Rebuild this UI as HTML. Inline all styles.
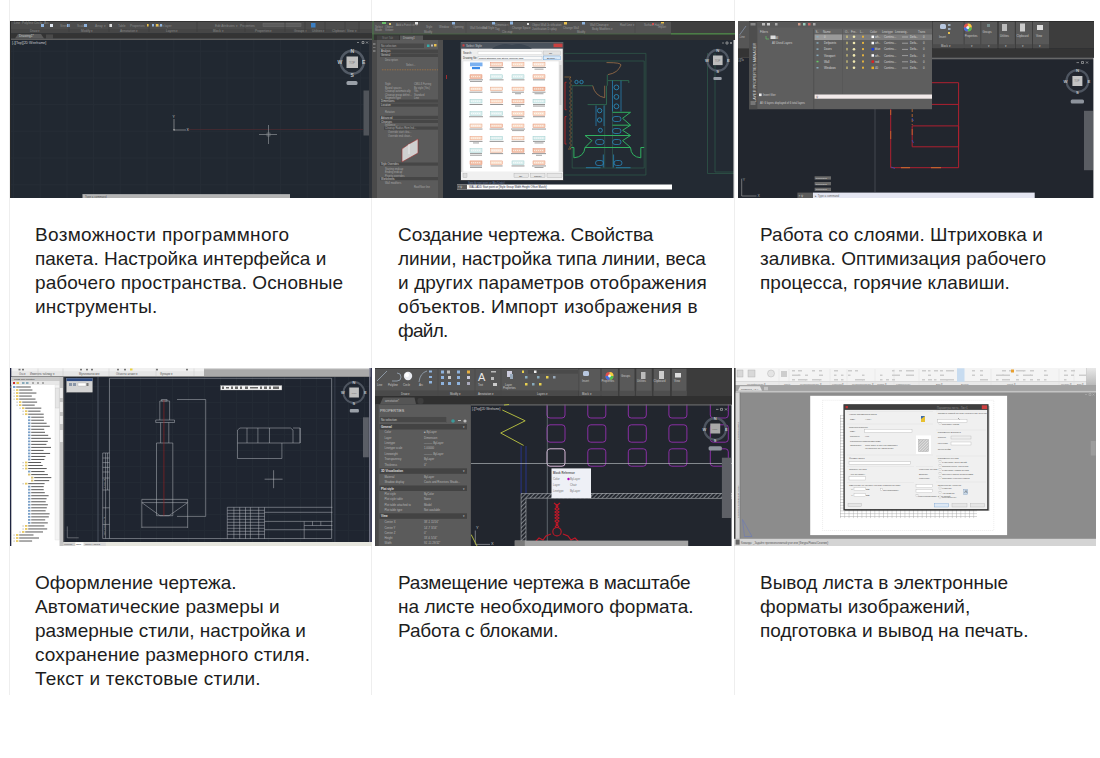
<!DOCTYPE html>
<html><head><meta charset="utf-8">
<style>
html,body{margin:0;padding:0;background:#fff;width:1100px;height:758px;overflow:hidden;position:relative}
body{font-family:"Liberation Sans",sans-serif}
.b{position:absolute;top:0;width:1px;height:695px;background:#eeeeee}
.im{position:absolute;overflow:hidden}
.im div,.im svg{position:absolute}
.t{position:absolute;font-size:19px;line-height:24px;color:#1d1d1d;white-space:nowrap}
</style></head><body>
<div class="b" style="left:9px"></div>
<div class="b" style="left:371px"></div>
<div class="b" style="left:734px"></div>

<div class="im" id="i1" style="left:10px;top:21px;width:362px;height:177px;background:#212730"><svg width="362" height="177" viewBox="0 0 362 177" style="left:0;top:0">
<defs>
<pattern id="g1" x="3" y="3" width="26.7" height="26.7" patternUnits="userSpaceOnUse">
<rect width="26.7" height="26.7" fill="#212831"/>
<path d="M0 0.5H26.7M0.5 0V26.7" stroke="#252c35" stroke-width="1"/>

</pattern>
</defs>
<rect width="362" height="177" fill="url(#g1)"/>
<rect x="0" y="0" width="362" height="8" fill="#4c4c4c"/>
<rect x="0" y="8" width="362" height="4.5" fill="#464646"/>
<rect x="0" y="12.5" width="362" height="5" fill="#343434"/>
<path d="M5 17.5L8 13H31L34 17.5Z" fill="#5a5a5a"/>
<rect x="36" y="13.5" width="7" height="4" fill="#4a4a4a"/>
<rect x="0" y="17.5" width="362" height="1.5" fill="#5e5e5e"/>
<rect x="0" y="0" width="1" height="177" fill="#2a2a2a"/>
<rect x="0" y="0" width="362" height="0.8" fill="#2e2e2e"/>
<g fill="#8a8a8a" font-size="3.2" font-family="Liberation Sans">
<text x="4" y="3">Line</text><text x="12" y="3">Polyline</text><text x="24" y="3">Circle</text><text x="34" y="3">Arc</text>
<text x="20" y="11">Draw ▾</text><text x="71" y="11">Modify ▾</text><text x="110" y="11">Annotation ▾</text><text x="156" y="11">Layers ▾</text>
<text x="203" y="11">Block ▾</text><text x="245" y="11">Properties ▾</text><text x="284" y="11">Groups ▾</text><text x="302" y="11">Utilities ▾</text><text x="322" y="11">Clipboard</text><text x="337" y="11">View ▾</text>
<text x="50" y="6">Stretch</text><text x="67" y="6">Scale</text><text x="85" y="6">Array ▾</text><text x="108" y="6">Table</text>
<text x="120" y="6">Properties</text><text x="145" y="6">Match layer</text><text x="205" y="6">Edit Attributes ▾</text><text x="230" y="6">Properties</text>
<text x="9" y="16.3" fill="#c8c8c8">Drawing1*</text>
<text x="2" y="22.5" fill="#c9ccd0" font-size="3.5">[-][Top][2D Wireframe]</text>
</g>
<g fill="#8fb3dd">
<rect x="31" y="3" width="3" height="3"/><rect x="40" y="3" width="3" height="3" fill="#dfe6ef"/><rect x="57" y="3" width="3" height="3"/><rect x="74" y="3" width="3" height="3"/><rect x="99" y="3" width="3" height="3" fill="#dddddd"/>
<rect x="137" y="3" width="2" height="2.5" fill="#e8c050"/><rect x="142" y="3" width="2" height="2.5" fill="#8fb3dd"/><rect x="146" y="3" width="2.5" height="2.5" fill="#e8c050"/><rect x="150" y="3" width="2" height="2.5" fill="#8fb3dd"/>
<rect x="301" y="2" width="4.5" height="4.5" fill="#3b7fc4"/>
</g>
<rect x="253" y="2.2" width="38" height="3.3" fill="#5c5c5c" stroke="#6e6e6e" stroke-width="0.5"/>
<g stroke="#3e3e3e" stroke-width="0.7">
<path d="M59 1V11M99 1V11M139 1V11M187 1V11M235 1V11M275 1V11M295 1V11M315 1V11M335 1V11M349 1V11"/>
</g>
<path d="M177 108.5H353" stroke="#4e2a30" stroke-width="0.7"/>
<path d="M164 98V109H176" stroke="#b0b0b0" stroke-width="0.6" fill="none"/>
<text x="162.5" y="97" font-size="3.5" fill="#c8c8c8" font-family="Liberation Sans">Y</text>
<text x="176.5" y="109.5" font-size="3.5" fill="#c8c8c8" font-family="Liberation Sans">X</text>
<rect x="163.2" y="108.2" width="1.6" height="1.6" fill="none" stroke="#aaa" stroke-width="0.4"/>
<path d="M249 113.5H267M258.5 104V123" stroke="#8a8e94" stroke-width="0.7"/>
<rect x="257" y="112" width="3" height="3" fill="none" stroke="#8a8e94" stroke-width="0.5"/>
<circle cx="342.2" cy="41.2" r="11.5" fill="none" stroke="#535b66" stroke-width="2.4"/>
<rect x="336.5" y="35.5" width="11.5" height="11.5" fill="#bfbfbf"/>
<text x="339" y="42.5" font-size="3" fill="#777" font-family="Liberation Sans">TOP</text>
<g font-size="5" fill="#c0c4c8" font-family="Liberation Sans" font-weight="bold">
<text x="340.5" y="31.5">N</text><text x="340.5" y="56">S</text><text x="352" y="43">E</text><text x="327.5" y="43">W</text>
</g>
<rect x="336.5" y="60" width="11" height="4" rx="1.5" fill="#9aa0a8"/>
<path d="M347 21.5H349M352 20.5h2v2h-2zM356 20.5l2 2M358 20.5l-2 2" stroke="#c0c0c0" stroke-width="0.6" fill="none"/>
<rect x="353.5" y="69.5" width="5.5" height="45" fill="#50545a"/>
<rect x="359" y="19" width="3" height="158" fill="#30343a"/>
<rect x="72.5" y="173.5" width="207.5" height="3.5" fill="#b3b3b3"/>
<rect x="72.5" y="173.5" width="207.5" height="0.6" fill="#d8d8d8"/>
<text x="75" y="176.6" font-size="2.8" fill="#555" font-family="Liberation Sans">Type a command</text>
</svg>
</div>
<div class="im" id="i2" style="left:372px;top:21px;width:363px;height:177px;background:#232a33"><svg width="363" height="177" viewBox="0 0 363 177" style="left:0;top:0">
<rect width="363" height="177" fill="#232a33"/>
<!-- ribbon -->
<rect x="0" y="0" width="299" height="13.5" fill="#535353"/>
<rect x="299" y="0" width="64" height="12.5" fill="#3f3f3f"/>
<rect x="0" y="0" width="363" height="0.8" fill="#2e2e2e"/>
<rect x="0" y="12.6" width="363" height="1" fill="#4a6b45"/>
<rect x="299" y="12.4" width="64" height="1.2" fill="#5aa050"/>
<rect x="0" y="13.6" width="363" height="5.4" fill="#343434"/>
<rect x="5" y="14.5" width="22" height="4.5" fill="#404040"/>
<rect x="28" y="14.5" width="23" height="4.5" fill="#575757"/>
<rect x="0.5" y="0" width="1" height="19" fill="#4a7a48"/>
<g fill="#9a9a9a" font-size="2.8" font-family="Liberation Sans">
<text x="3" y="7">Select</text><text x="3" y="10">Mode</text><text x="13" y="7">Object</text><text x="13" y="10">Viewer</text>
<text x="24" y="4.5">Add a Function ▾</text><text x="54" y="7">Style</text><text x="67" y="7">Window</text><text x="81" y="7">Opening</text>
<text x="98" y="8">Wall Selected</text><text x="110" y="8">Wall Style</text><text x="123" y="5">Dimension</text><text x="123" y="9">Tag</text>
<text x="140" y="8">Change Space</text><text x="160" y="4.5">Object Wall Justification</text><text x="160" y="9">Justification Display</text>
<text x="191" y="8">Change Wall</text><text x="218" y="4.5">Wall Cleanup ▾</text><text x="220" y="9">Body Modifiers ▾</text><text x="248" y="4.5">Roof Line ▾</text><text x="272" y="4.5">Surface Hatch ▾</text>
<text x="286" y="7">Import</text><text x="52" y="12.3">Modify</text><text x="130" y="12.3">Cleanup</text><text x="205" y="12.3">Modify</text>
<text x="10" y="17.8" fill="#7a7a7a">Start Tab</text><text x="31" y="17.8" fill="#b8b8b8">Drawing1</text>
</g>
<g fill="#8fb3dd"><rect x="10" y="1" width="4" height="2" fill="#6ac06a"/><rect x="17" y="2" width="2" height="2" fill="#d6c070"/><rect x="43" y="1" width="3" height="2.5" fill="#ddd"/><rect x="80" y="1" width="3" height="2.5"/><rect x="120" y="1" width="3" height="2.5"/><rect x="138" y="0.5" width="3" height="3"/><rect x="155" y="2" width="2" height="2" fill="#ddd"/><rect x="192" y="1" width="3" height="2.5" fill="#e8c050"/><rect x="210" y="1" width="3" height="2.5"/><rect x="280" y="2" width="2" height="2" fill="#d05050"/><rect x="289" y="1" width="3" height="1.5" fill="#e8c050"/></g>
<g stroke="#474747" stroke-width="0.6"><path d="M40 1V12M94 1V12M135 1V12M178 1V12M263 1V12"/></g>
<!-- properties palette -->
<rect x="0" y="19" width="71" height="158" fill="#5b5b5b"/>
<rect x="0" y="19" width="5" height="158" fill="#4a4a4a"/>
<rect x="66" y="19" width="5" height="158" fill="#4e4e4e"/>
<rect x="1" y="22" width="2.5" height="2" fill="#777"/><rect x="1" y="26" width="2.5" height="1" fill="#777"/><rect x="1" y="29" width="2.5" height="2" fill="#777"/>
<rect x="8" y="22.5" width="44" height="4.5" fill="#484848"/>
<text x="9" y="26" font-size="2.8" fill="#aaa" font-family="Liberation Sans">No selection</text>
<rect x="55" y="23.5" width="2.5" height="2.5" fill="#3aa" /><rect x="59" y="23.5" width="2" height="2" fill="#bbb"/><rect x="62" y="23" width="2.5" height="2.5" fill="#e8c050"/>
<g fill="#464646">
<rect x="8" y="28.5" width="58" height="3.5"/><rect x="8" y="32.5" width="58" height="3.5"/>
<rect x="8" y="78.5" width="58" height="3.2"/><rect x="8" y="82.5" width="58" height="3.2"/>
<rect x="8" y="94.8" width="58" height="3.2"/><rect x="8" y="98.8" width="58" height="3.2"/>
<rect x="12" y="105.5" width="54" height="3.2"/>
<rect x="8" y="141.5" width="58" height="3.2"/><rect x="8" y="156" width="58" height="3.2"/>
</g>
<g fill="#a8a8a8" font-size="2.6" font-family="Liberation Sans">
<text x="9" y="31.2" fill="#ccc">Analysis</text><text x="9" y="35.2" fill="#ccc">General</text><text x="13" y="39.5">Description</text>
<text x="34" y="44.5">Select...</text>
<text x="13" y="64">Style</text><text x="42" y="64">CMU-8 Furring</text>
<text x="13" y="67.5">Bound spaces</text><text x="42" y="67.5">By style (Yes)</text>
<text x="13" y="71">Cleanup automatically</text><text x="42" y="71">Yes</text>
<text x="13" y="74.5">Cleanup group definit...</text><text x="42" y="74.5">Standard</text>
<text x="13" y="78">Segment type</text><text x="42" y="78">Line</text>
<text x="9" y="81.2" fill="#ccc">Dimensions</text><text x="9" y="85.2" fill="#ccc">Location</text>
<text x="13" y="92">Rotation</text><text x="9" y="97.5" fill="#ccc">Advanced</text><text x="9" y="101.5" fill="#ccc">Cleanups</text>
<text x="13" y="105">Influence ...</text><text x="13" y="108">Cleanup Radius Rem Ind...</text><text x="16" y="112">Override start clea...</text><text x="16" y="115.5">Override end clean...</text>
<text x="9" y="144.2" fill="#ccc">Style Overrides</text><text x="13" y="148.5">Starting endcap</text><text x="13" y="152">Ending endcap</text><text x="13" y="155.5">Priority overrides</text>
<text x="9" y="158.8" fill="#ccc">Worksheets</text><text x="13" y="163">Wall modifiers</text><text x="42" y="166.5">Roof/floor line</text>
</g>
<path d="M10 48.8H66" stroke="#b07a40" stroke-width="0.7" stroke-dasharray="1.5 1"/>
<path d="M30 128L46 118L46 127L30 139Z" fill="#dcdcdc"/>
<path d="M30 128L37 123L46 118L46 132L30 141Z" fill="#cfcfcf" stroke="#a03030" stroke-width="0.6"/>
<path d="M37 123L37 133" stroke="#eee" stroke-width="0.8"/>
<!-- small red mark -->
<rect x="74" y="54" width="0.8" height="4" fill="#c03030"/>
<!-- drawing -->
<g fill="none" stroke-width="0.7">
<path d="M192.4 32.4H273.9V154H192.4" stroke="#2f5c4a"/>
<path d="M192.4 40H272.2V147H200.2V64" stroke="#2f5c4a"/>
<path d="M335.5 32V152.5H363M343 32V151H363" stroke="#2f5c4a"/>
<path d="M235.3 53.6V64.7M200.2 64.7H220.7M234.5 64.7V83.6H215.6M236 59.6H256.8V62" stroke="#2f6a50" stroke-width="0.9"/>
<path d="M234.5 41.6H236Q249 41.6 249 44Q246 52 236 53.6" stroke="#b07a4a"/>
<path d="M220.7 64.7Q223 75 232.7 76.7V64.7" stroke="#b07a4a"/>
<path d="M232.7 83.6V147M240.5 83.6V147" stroke="#2d4a48" stroke-width="1"/>
<path d="M240.5 59.6V90.5M249 59.6V90.5M224 84.5V105M232 84.5V105" stroke="#2a8ac0"/>
<circle cx="244.4" cy="66.4" r="2.4" stroke="#2aa0d8"/><circle cx="244.4" cy="75.9" r="2.4" stroke="#2aa0d8"/><circle cx="244.4" cy="85.3" r="2.4" stroke="#2aa0d8"/>
<circle cx="227.6" cy="89.6" r="2.2" stroke="#2aa0d8"/><circle cx="227.6" cy="99" r="2.2" stroke="#2aa0d8"/><circle cx="228.4" cy="109.3" r="2" stroke="#2aa0d8"/>
<circle cx="204.5" cy="61" r="1.7" stroke="#2aa0d8"/><circle cx="209.5" cy="61" r="1.7" stroke="#2aa0d8"/>
<path d="M240.5 91.3H258.5L250.6 97.3L258.5 104.2H240.5M258.5 104.2L250.6 109.3L258.5 114.5H213L219.9 119.6L213 126.5H258.5L250.6 119.6L258.5 114.5M258.5 126.5Q259 136 268.8 136.8V126.5H272.2M213 126.5Q212 136 201.9 136.8V126.5H199.3" stroke="#30b060" stroke-width="1"/>
<g stroke="#2a90c8" stroke-width="0.7">
<rect x="240.5" y="95.5" width="8.5" height="5" rx="2.5"/><rect x="240.5" y="107.5" width="8.5" height="5" rx="2.5"/><rect x="240.5" y="118.5" width="8.5" height="5" rx="2.5"/>
<rect x="223.5" y="118.5" width="8.5" height="5" rx="2.5"/><rect x="223.5" y="139.5" width="8" height="5" rx="2.5"/><rect x="242" y="139.5" width="8" height="5" rx="2.5"/>
<path d="M231.3 133.5V146.5M241.6 133.5V146.5M213.9 146.7H228.5M243.9 146.7H258.5"/>
</g>
<path d="M194.5 61.3H193V88.7H194.5M194.5 95.6H193V123H194.5" stroke="#b02828" stroke-width="1"/>
<path d="M192.4 56H199M198.8 56L197.5 58L199.5 60L197.5 62L199.5 64L197.5 66L199.5 68L197.5 70L199.5 72L197.5 74L199.5 76L197.5 78L199.5 80L197.5 82L199.5 84L197.5 86L199.5 88L197.5 90L199.5 92L197.5 94L199.5 96L197.5 98L199.5 100L197.5 102L199.5 104L197.5 106L199.5 108L197.5 110L199.5 112L197.5 114L199.5 116L197.5 118L199.5 120L197.5 122L199.5 124L197.5 126L199 128H196" stroke="#b0783a" stroke-width="0.6"/>
</g>
<!-- dialog -->
<rect x="88.5" y="21.5" width="103" height="138.5" fill="#3a3a3a" opacity="0.6"/>
<rect x="89" y="21.7" width="102" height="137.3" fill="#eeeeee" stroke="#6a6a6a" stroke-width="0.5"/>
<rect x="89" y="21.7" width="102" height="6" fill="#4a525c"/>
<path d="M120 27.7Q130 21 140 24Q150 21 160 27.7" fill="#3a4450"/>
<rect x="181.5" y="22.6" width="9" height="3.6" fill="#c84040"/>
<rect x="90.5" y="23.3" width="2" height="2.2" fill="#d04040"/>
<text x="94" y="26.3" font-size="3" fill="#c8ccd0" font-family="Liberation Sans">Select Style</text>
<text x="91" y="33" font-size="2.6" fill="#333" font-family="Liberation Sans">Search:</text>
<rect x="106" y="30.5" width="64" height="3.2" fill="#fff" stroke="#bbb" stroke-width="0.3"/>
<rect x="171.5" y="30" width="17" height="4" fill="#e4e4e4" stroke="#aaa" stroke-width="0.3"/>
<text x="177" y="33" font-size="2.4" fill="#333" font-family="Liberation Sans">Go</text>
<text x="91" y="38" font-size="2.6" fill="#333" font-family="Liberation Sans">Drawing file:</text>
<rect x="106" y="35.5" width="64" height="3.2" fill="#fafafa" stroke="#9ab" stroke-width="0.3"/>
<text x="107" y="37.8" font-size="2.3" fill="#222" font-family="Liberation Sans">Project Standard Wall Styles (Imperial).dwg</text>
<rect x="171.5" y="35" width="17" height="3.8" fill="#dceaf8" stroke="#5a9ad8" stroke-width="0.4"/>
<text x="175" y="37.9" font-size="2.4" fill="#333" font-family="Liberation Sans">Browse...</text>
<rect x="91" y="40" width="96" height="111" fill="#fff" stroke="#c8c8c8" stroke-width="0.3"/>
<rect x="187" y="40" width="3" height="111" fill="#e6e6e6"/><rect x="187.5" y="44" width="2" height="40" fill="#cfcfcf"/>
<g font-family="Liberation Sans" font-size="2" fill="#555">
<rect x="98" y="41.5" width="12.5" height="3.8" fill="#7ab0f0"/><rect x="100" y="46" width="8" height="2.2" fill="#3a8ae8"/>
<rect x="118.6" y="41.5" width="12" height="3.6" fill="#f8d8c4" stroke="#e08060" stroke-width="0.4"/>
<path d="M119.6 43.3H129.6" stroke="#fff" stroke-width="0.7" stroke-dasharray="1.2 0.8"/>
<rect x="117.6" y="46.1" width="14" height="0.9" fill="#8a8a8a"/>
<rect x="120.1" y="47.7" width="9" height="0.9" fill="#9a9a9a"/>
<rect x="140" y="41.5" width="12" height="3.6" fill="#fae0cc" stroke="#e89070" stroke-width="0.4"/>
<path d="M141 43.3H151" stroke="#fff" stroke-width="0.7" stroke-dasharray="1.2 0.8"/>
<rect x="139.5" y="46.1" width="13" height="0.9" fill="#8a8a8a"/>
<rect x="161" y="41.5" width="12" height="3.6" fill="#fbe6d8" stroke="#e0906a" stroke-width="0.4"/>
<path d="M162 43.3H172" stroke="#fff" stroke-width="0.7" stroke-dasharray="1.2 0.8"/>
<rect x="160.0" y="46.1" width="14" height="0.9" fill="#8a8a8a"/>
<rect x="162.5" y="47.7" width="9" height="0.9" fill="#9a9a9a"/>
<rect x="98" y="53.8" width="12" height="3.6" fill="#f2c4ac" stroke="#e07a58" stroke-width="0.4"/>
<path d="M99 55.599999999999994H109" stroke="#fff" stroke-width="0.7" stroke-dasharray="1.2 0.8"/>
<rect x="97.0" y="58.4" width="14" height="0.9" fill="#8a8a8a"/>
<rect x="98.0" y="60.0" width="12" height="0.9" fill="#9a9a9a"/>
<rect x="118.6" y="53.8" width="12" height="3.6" fill="#dff0f0" stroke="#90c8c8" stroke-width="0.4"/>
<path d="M119.6 55.599999999999994H129.6" stroke="#fff" stroke-width="0.7" stroke-dasharray="1.2 0.8"/>
<rect x="117.6" y="58.4" width="14" height="0.9" fill="#8a8a8a"/>
<rect x="140" y="53.8" width="12" height="3.6" fill="#dff0f0" stroke="#90c8c8" stroke-width="0.4"/>
<path d="M141 55.599999999999994H151" stroke="#fff" stroke-width="0.7" stroke-dasharray="1.2 0.8"/>
<rect x="139.5" y="58.4" width="13" height="0.9" fill="#8a8a8a"/>
<rect x="161" y="53.8" width="12" height="3.6" fill="#f8d8c4" stroke="#e08060" stroke-width="0.4"/>
<path d="M162 55.599999999999994H172" stroke="#fff" stroke-width="0.7" stroke-dasharray="1.2 0.8"/>
<rect x="161.0" y="58.4" width="12" height="0.9" fill="#8a8a8a"/>
<rect x="98" y="66.1" width="12" height="3.6" fill="#fae0cc" stroke="#e89070" stroke-width="0.4"/>
<path d="M99 67.89999999999999H109" stroke="#fff" stroke-width="0.7" stroke-dasharray="1.2 0.8"/>
<rect x="97.5" y="70.69999999999999" width="13" height="0.9" fill="#8a8a8a"/>
<rect x="118.6" y="66.1" width="12" height="3.6" fill="#fbe6d8" stroke="#e0906a" stroke-width="0.4"/>
<path d="M119.6 67.89999999999999H129.6" stroke="#fff" stroke-width="0.7" stroke-dasharray="1.2 0.8"/>
<rect x="118.6" y="70.69999999999999" width="12" height="0.9" fill="#8a8a8a"/>
<rect x="140" y="66.1" width="12" height="3.6" fill="#fae0cc" stroke="#e89070" stroke-width="0.4"/>
<path d="M141 67.89999999999999H151" stroke="#fff" stroke-width="0.7" stroke-dasharray="1.2 0.8"/>
<rect x="140.0" y="70.69999999999999" width="12" height="0.9" fill="#8a8a8a"/>
<rect x="143.0" y="72.3" width="6" height="0.9" fill="#9a9a9a"/>
<rect x="161" y="66.1" width="12" height="3.6" fill="#f2c4ac" stroke="#e07a58" stroke-width="0.4"/>
<path d="M162 67.89999999999999H172" stroke="#fff" stroke-width="0.7" stroke-dasharray="1.2 0.8"/>
<rect x="160.5" y="70.69999999999999" width="13" height="0.9" fill="#8a8a8a"/>
<rect x="162.5" y="72.3" width="9" height="0.9" fill="#9a9a9a"/>
<rect x="98" y="78.4" width="12" height="3.6" fill="#dff0f0" stroke="#90c8c8" stroke-width="0.4"/>
<path d="M99 80.2H109" stroke="#fff" stroke-width="0.7" stroke-dasharray="1.2 0.8"/>
<rect x="97.5" y="83.0" width="13" height="0.9" fill="#8a8a8a"/>
<rect x="118.6" y="78.4" width="12" height="3.6" fill="#fae0cc" stroke="#e89070" stroke-width="0.4"/>
<path d="M119.6 80.2H129.6" stroke="#fff" stroke-width="0.7" stroke-dasharray="1.2 0.8"/>
<rect x="118.1" y="83.0" width="13" height="0.9" fill="#8a8a8a"/>
<rect x="140" y="78.4" width="12" height="3.6" fill="#f8d8c4" stroke="#e08060" stroke-width="0.4"/>
<path d="M141 80.2H151" stroke="#fff" stroke-width="0.7" stroke-dasharray="1.2 0.8"/>
<rect x="139.5" y="83.0" width="13" height="0.9" fill="#8a8a8a"/>
<rect x="143.0" y="84.60000000000001" width="6" height="0.9" fill="#9a9a9a"/>
<rect x="161" y="78.4" width="12" height="3.6" fill="#dff0f0" stroke="#90c8c8" stroke-width="0.4"/>
<path d="M162 80.2H172" stroke="#fff" stroke-width="0.7" stroke-dasharray="1.2 0.8"/>
<rect x="161.0" y="83.0" width="12" height="0.9" fill="#8a8a8a"/>
<rect x="161.0" y="84.60000000000001" width="12" height="0.9" fill="#9a9a9a"/>
<rect x="98" y="90.7" width="12" height="3.6" fill="#dff0f0" stroke="#90c8c8" stroke-width="0.4"/>
<path d="M99 92.5H109" stroke="#fff" stroke-width="0.7" stroke-dasharray="1.2 0.8"/>
<rect x="97.0" y="95.3" width="14" height="0.9" fill="#8a8a8a"/>
<rect x="118.6" y="90.7" width="12" height="3.6" fill="#dff0f0" stroke="#90c8c8" stroke-width="0.4"/>
<path d="M119.6 92.5H129.6" stroke="#fff" stroke-width="0.7" stroke-dasharray="1.2 0.8"/>
<rect x="117.6" y="95.3" width="14" height="0.9" fill="#8a8a8a"/>
<rect x="140" y="90.7" width="12" height="3.6" fill="#fae0cc" stroke="#e89070" stroke-width="0.4"/>
<path d="M141 92.5H151" stroke="#fff" stroke-width="0.7" stroke-dasharray="1.2 0.8"/>
<rect x="139.5" y="95.3" width="13" height="0.9" fill="#8a8a8a"/>
<rect x="141.5" y="96.9" width="9" height="0.9" fill="#9a9a9a"/>
<rect x="161" y="90.7" width="12" height="3.6" fill="#fae0cc" stroke="#e89070" stroke-width="0.4"/>
<path d="M162 92.5H172" stroke="#fff" stroke-width="0.7" stroke-dasharray="1.2 0.8"/>
<rect x="161.0" y="95.3" width="12" height="0.9" fill="#8a8a8a"/>
<rect x="98" y="103" width="12" height="3.6" fill="#fbe6d8" stroke="#e0906a" stroke-width="0.4"/>
<path d="M99 104.8H109" stroke="#fff" stroke-width="0.7" stroke-dasharray="1.2 0.8"/>
<rect x="97.5" y="107.6" width="13" height="0.9" fill="#8a8a8a"/>
<rect x="118.6" y="103" width="12" height="3.6" fill="#f8d8c4" stroke="#e08060" stroke-width="0.4"/>
<path d="M119.6 104.8H129.6" stroke="#fff" stroke-width="0.7" stroke-dasharray="1.2 0.8"/>
<rect x="117.6" y="107.6" width="14" height="0.9" fill="#8a8a8a"/>
<rect x="140" y="103" width="12" height="3.6" fill="#fae0cc" stroke="#e89070" stroke-width="0.4"/>
<path d="M141 104.8H151" stroke="#fff" stroke-width="0.7" stroke-dasharray="1.2 0.8"/>
<rect x="139.0" y="107.6" width="14" height="0.9" fill="#8a8a8a"/>
<rect x="140.0" y="109.2" width="12" height="0.9" fill="#9a9a9a"/>
<rect x="161" y="103" width="12" height="3.6" fill="#f8d8c4" stroke="#e08060" stroke-width="0.4"/>
<path d="M162 104.8H172" stroke="#fff" stroke-width="0.7" stroke-dasharray="1.2 0.8"/>
<rect x="160.0" y="107.6" width="14" height="0.9" fill="#8a8a8a"/>
<rect x="98" y="115.3" width="12" height="3.6" fill="#fae0cc" stroke="#e89070" stroke-width="0.4"/>
<path d="M99 117.1H109" stroke="#fff" stroke-width="0.7" stroke-dasharray="1.2 0.8"/>
<rect x="97.5" y="119.89999999999999" width="13" height="0.9" fill="#8a8a8a"/>
<rect x="101.0" y="121.5" width="6" height="0.9" fill="#9a9a9a"/>
<rect x="118.6" y="115.3" width="12" height="3.6" fill="#dff0f0" stroke="#90c8c8" stroke-width="0.4"/>
<path d="M119.6 117.1H129.6" stroke="#fff" stroke-width="0.7" stroke-dasharray="1.2 0.8"/>
<rect x="117.6" y="119.89999999999999" width="14" height="0.9" fill="#8a8a8a"/>
<rect x="140" y="115.3" width="12" height="3.6" fill="#fbe6d8" stroke="#e0906a" stroke-width="0.4"/>
<path d="M141 117.1H151" stroke="#fff" stroke-width="0.7" stroke-dasharray="1.2 0.8"/>
<rect x="139.5" y="119.89999999999999" width="13" height="0.9" fill="#8a8a8a"/>
<rect x="161" y="115.3" width="12" height="3.6" fill="#dff0f0" stroke="#90c8c8" stroke-width="0.4"/>
<path d="M162 117.1H172" stroke="#fff" stroke-width="0.7" stroke-dasharray="1.2 0.8"/>
<rect x="161.0" y="119.89999999999999" width="12" height="0.9" fill="#8a8a8a"/>
<rect x="162.5" y="121.5" width="9" height="0.9" fill="#9a9a9a"/>
<rect x="98" y="127.6" width="12" height="3.6" fill="#dff0f0" stroke="#90c8c8" stroke-width="0.4"/>
<path d="M99 129.4H109" stroke="#fff" stroke-width="0.7" stroke-dasharray="1.2 0.8"/>
<rect x="98.0" y="132.2" width="12" height="0.9" fill="#8a8a8a"/>
<rect x="98.0" y="133.79999999999998" width="12" height="0.9" fill="#9a9a9a"/>
<rect x="118.6" y="127.6" width="12" height="3.6" fill="#fbe6d8" stroke="#e0906a" stroke-width="0.4"/>
<path d="M119.6 129.4H129.6" stroke="#fff" stroke-width="0.7" stroke-dasharray="1.2 0.8"/>
<rect x="118.1" y="132.2" width="13" height="0.9" fill="#8a8a8a"/>
<rect x="140" y="127.6" width="12" height="3.6" fill="#f2c4ac" stroke="#e07a58" stroke-width="0.4"/>
<path d="M141 129.4H151" stroke="#fff" stroke-width="0.7" stroke-dasharray="1.2 0.8"/>
<rect x="139.0" y="132.2" width="14" height="0.9" fill="#8a8a8a"/>
<rect x="161" y="127.6" width="12" height="3.6" fill="#f2c4ac" stroke="#e07a58" stroke-width="0.4"/>
<path d="M162 129.4H172" stroke="#fff" stroke-width="0.7" stroke-dasharray="1.2 0.8"/>
<rect x="160.0" y="132.2" width="14" height="0.9" fill="#8a8a8a"/>
<rect x="164.0" y="133.79999999999998" width="6" height="0.9" fill="#9a9a9a"/>
<rect x="98" y="139.9" width="12" height="3.6" fill="#f2c4ac" stroke="#e07a58" stroke-width="0.4"/>
<path d="M99 141.70000000000002H109" stroke="#fff" stroke-width="0.7" stroke-dasharray="1.2 0.8"/>
<rect x="98.0" y="144.5" width="12" height="0.9" fill="#8a8a8a"/>
<rect x="98.0" y="146.1" width="12" height="0.9" fill="#9a9a9a"/>
<rect x="118.6" y="139.9" width="12" height="3.6" fill="#fae0cc" stroke="#e89070" stroke-width="0.4"/>
<path d="M119.6 141.70000000000002H129.6" stroke="#fff" stroke-width="0.7" stroke-dasharray="1.2 0.8"/>
<rect x="118.6" y="144.5" width="12" height="0.9" fill="#8a8a8a"/>
<rect x="140" y="139.9" width="12" height="3.6" fill="#dff0f0" stroke="#90c8c8" stroke-width="0.4"/>
<path d="M141 141.70000000000002H151" stroke="#fff" stroke-width="0.7" stroke-dasharray="1.2 0.8"/>
<rect x="139.5" y="144.5" width="13" height="0.9" fill="#8a8a8a"/>
<rect x="161" y="139.9" width="12" height="3.6" fill="#f8d8c4" stroke="#e08060" stroke-width="0.4"/>
<path d="M162 141.70000000000002H172" stroke="#fff" stroke-width="0.7" stroke-dasharray="1.2 0.8"/>
<rect x="160.0" y="144.5" width="14" height="0.9" fill="#8a8a8a"/>
<rect x="162.5" y="146.1" width="9" height="0.9" fill="#9a9a9a"/>
</g>
<rect x="89" y="151" width="102" height="8" fill="#f0f0f0"/>
<rect x="91" y="152.5" width="4" height="4" fill="#ddd" stroke="#999" stroke-width="0.3"/>
<rect x="142" y="152.5" width="14.5" height="4" fill="#e6e6e6" stroke="#999" stroke-width="0.3"/>
<rect x="158.5" y="152.5" width="14.5" height="4" fill="#e6e6e6" stroke="#999" stroke-width="0.3"/>
<rect x="175" y="152.5" width="15" height="4" fill="#e6e6e6" stroke="#999" stroke-width="0.3"/>
<text x="147" y="155.5" font-size="2.4" fill="#333" font-family="Liberation Sans">OK</text>
<text x="162" y="155.5" font-size="2.4" fill="#333" font-family="Liberation Sans">Cancel</text>
<!-- command line -->
<text x="96" y="162.5" font-size="2.6" fill="#6a7a9a" font-family="Liberation Sans">Specify next point or [Arc/Undo]:</text>
<rect x="85" y="163.5" width="215" height="5" fill="#ffffff"/>
<rect x="85" y="163.5" width="10" height="5" fill="#5a5a5a"/>
<text x="86" y="167.3" font-size="2.8" fill="#ddd" font-family="Liberation Sans">× ⚲</text>
<text x="97" y="167.3" font-size="2.7" fill="#223" font-family="Liberation Sans">WALLADD Start point or [Style Group Width Height Offset Match]:</text>
<!-- viewcube -->
<circle cx="345.7" cy="39.3" r="10.4" fill="none" stroke="#505864" stroke-width="2.2"/>
<rect x="341" y="34.5" width="9.6" height="9.6" fill="#bdbdbd"/>
<text x="343" y="40.5" font-size="2.6" fill="#777" font-family="Liberation Sans">TOP</text>
<g font-size="4.2" fill="#c0c4c8" font-family="Liberation Sans" font-weight="bold"><text x="344.2" y="30.5">N</text><text x="344.2" y="52">S</text><text x="355" y="41">E</text><text x="333" y="41">W</text></g>
<rect x="341.4" y="55.9" width="8.3" height="3" rx="1" fill="#9aa0a8"/>
<path d="M350 22H352M354 21h2v2h-2zM358 21l2 2M360 21l-2 2" stroke="#c0c0c0" stroke-width="0.6" fill="none"/>
<rect x="361.5" y="19" width="1.5" height="158" fill="#e8e8e8"/>
</svg>
</div>
<div class="im" id="i3" style="left:738px;top:21px;width:356px;height:177px;background:#22262e"><svg width="356" height="177" viewBox="0 0 356 177" style="left:0;top:0">
<rect width="356" height="177" fill="#22262e"/>
<rect x="0" y="0" width="356" height="27.4" fill="#3d3d3d"/>
<rect x="0" y="0" width="356" height="0.8" fill="#2a2a2a"/>
<rect x="0" y="0" width="11" height="28" fill="#565656"/>
<path d="M1.5 14L8 5" stroke="#8a9ab0" stroke-width="0.7"/>
<text x="1.5" y="16.5" font-size="2.8" fill="#bbb" font-family="Liberation Sans">Line</text>
<rect x="0" y="28" width="11" height="9" fill="#383838"/>
<path d="M3 37L5 33H11V37Z" fill="#5a5a5a"/>
<text x="0" y="39.5" font-size="2.6" fill="#bbb" font-family="Liberation Sans">[-][To</text>
<rect x="194.7" y="0.8" width="31" height="26.6" fill="#585858"/>
<rect x="194.7" y="23.2" width="31" height="4.2" fill="#4c4c4c"/>
<rect x="226.5" y="0.8" width="16" height="26.6" fill="#585858"/>
<rect x="226.5" y="23.2" width="16" height="4.2" fill="#4c4c4c"/>
<rect x="243.2" y="0.8" width="16" height="26.6" fill="#585858"/>
<rect x="243.2" y="23.2" width="16" height="4.2" fill="#4c4c4c"/>
<rect x="260.8" y="0.8" width="16" height="26.6" fill="#585858"/>
<rect x="260.8" y="23.2" width="16" height="4.2" fill="#4c4c4c"/>
<rect x="278" y="0.8" width="16" height="26.6" fill="#585858"/>
<rect x="278" y="23.2" width="16" height="4.2" fill="#4c4c4c"/>
<rect x="295" y="0.8" width="16" height="26.6" fill="#585858"/>
<rect x="295" y="23.2" width="16" height="4.2" fill="#4c4c4c"/>
<rect x="202" y="3" width="6" height="5" rx="1.5" fill="#b8c8e0"/><rect x="210" y="3" width="2.5" height="2" fill="#9ab"/><rect x="210" y="7" width="2.5" height="2" fill="#9ab"/><rect x="210" y="11" width="2" height="2" fill="#e8c050"/>
<circle cx="229.8" cy="6.5" r="4" fill="#e05050"/><path d="M229.8 2.5A4 4 0 0 1 233.8 6.5L229.8 6.5Z" fill="#f0d040"/><path d="M233.8 6.5A4 4 0 0 1 229.8 10.5L229.8 6.5Z" fill="#50c050"/><path d="M229.8 10.5A4 4 0 0 1 225.8 6.5L229.8 6.5Z" fill="#4070e0"/><circle cx="229.8" cy="6.5" r="1.5" fill="#eee"/>
<rect x="249" y="3" width="3" height="3" fill="#8aa" opacity="0.6"/><rect x="264" y="3" width="5" height="7" fill="#bbb"/><rect x="282" y="2.5" width="5" height="8" fill="#ccc"/><rect x="299" y="4" width="6" height="5" fill="#ddd"/>
<g fill="#c8c8c8" font-size="2.8" font-family="Liberation Sans">
<text x="201" y="16.5">Insert</text><text x="226.7" y="15.5">Properties</text><text x="244.5" y="12">Groups</text><text x="262" y="15.5">Utilities</text><text x="278.5" y="15.5">Clipboard</text><text x="298" y="15.5">View</text>
<text x="203" y="26.3">Block ▾</text><text x="233" y="26.3">▾</text><text x="250" y="26.3">▾</text><text x="267" y="26.3">▾</text><text x="284" y="26.3">▾</text><text x="301" y="26.3">▾</text>
</g>
<rect x="0" y="27.4" width="356" height="9.2" fill="#343434"/>
<rect x="11" y="36.6" width="345" height="1.7" fill="#686868"/>
<g fill="none" stroke="#b02030" stroke-width="1">
<path d="M190 61.7H220.6V146.7H152.7V85M190 83.4H220.6M174.2 104.9H220.6V125.8H174.2V104.9"/>
</g>
<path d="M174.2 88V104" stroke="#d07030" stroke-width="0.8" stroke-dasharray="3 2"/><path d="M174.2 108V114M152.7 89V94M152.7 110V118" stroke="#d07030" stroke-width="0.8"/>
<path d="M174 97l1.5 3M174 119l1.5 3M153 146l4 1.5" stroke="#3050d0" stroke-width="0.7"/>
<rect x="193" y="146.2" width="10" height="1" fill="#d07030"/><rect x="163" y="146.2" width="9" height="1" fill="#d07030"/>
<path d="M137 88V171" stroke="#5a5e66" stroke-width="0.6"/>
<path d="M338.5 41.6H341M343.5 40.5h2v2h-2zM348 40.5l2 2M350 40.5l-2 2" stroke="#c0c0c0" stroke-width="0.6" fill="none"/>
<circle cx="339.4" cy="60" r="10.9" fill="none" stroke="#4e5560" stroke-width="2.2"/>
<rect x="334.4" y="55" width="10" height="10" fill="#c4c4c4"/>
<text x="336.3" y="61" font-size="2.6" fill="#777" font-family="Liberation Sans">TOP</text>
<g font-size="4.2" fill="#c0c4c8" font-family="Liberation Sans" font-weight="bold"><text x="338" y="51">N</text><text x="338" y="73">S</text><text x="349.5" y="61.5">E</text><text x="325.5" y="61.5">W</text></g>
<rect x="332.7" y="78.4" width="13.3" height="4.2" rx="1.5" fill="#8d939c"/>
<rect x="346" y="89.8" width="9.3" height="59.4" fill="#5a5d63"/>
<rect x="355.3" y="37" width="0.7" height="140" fill="#e0e0e0"/>
<path d="M3.7 157.7V175H18.5" stroke="#a8a8a8" stroke-width="0.6" fill="none"/>
<text x="4.8" y="160" font-size="3.5" fill="#aaa" font-family="Liberation Sans">Y</text><text x="19.5" y="176" font-size="3.5" fill="#aaa" font-family="Liberation Sans">X</text>
<rect x="76.6" y="155.3" width="16.4" height="3.3" fill="#6a6a6a"/>
<text x="77.5" y="157.8" font-size="2.4" fill="#ddd" font-family="Liberation Sans">Command:</text>
<rect x="76.6" y="161" width="16.4" height="3.3" fill="#6a6a6a"/>
<text x="77.5" y="163.5" font-size="2.4" fill="#ddd" font-family="Liberation Sans">Command:</text>
<rect x="76.6" y="166.7" width="16.4" height="3.3" fill="#6a6a6a"/>
<text x="77.5" y="169.2" font-size="2.4" fill="#ddd" font-family="Liberation Sans">Command:</text>
<rect x="59.4" y="171.6" width="15.6" height="5.4" fill="#5a5a5a"/>
<text x="60.5" y="175.8" font-size="2.8" fill="#ddd" font-family="Liberation Sans">× ⚲</text>
<rect x="75" y="171.6" width="221.7" height="5.4" fill="#e4e6f2"/>
<text x="77" y="175.8" font-size="2.8" fill="#666" font-family="Liberation Sans">▸ Type a command</text>
<rect x="11" y="0.8" width="183" height="87.4" fill="#5e5e5e"/>
<rect x="11" y="0.8" width="8.3" height="87.4" fill="#4e4e4e"/>
<text transform="translate(17.6 81) rotate(-90)" font-size="3.9" fill="#d0d0d0" font-family="Liberation Sans">LAYER PROPERTIES MANAGER</text>
<rect x="12.5" y="2" width="5" height="2.5" fill="#888"/><rect x="12.5" y="80" width="5" height="4" fill="#777"/>
<rect x="19.3" y="0.8" width="174.7" height="5.6" fill="#595959"/>
<rect x="24" y="2" width="3" height="2.5" fill="#bbb"/><rect x="29" y="2" width="3" height="2.5" fill="#ccc"/><rect x="37" y="2" width="2.5" height="2.5" fill="#aaa"/><rect x="60" y="2" width="2.5" height="2.5" fill="#c98"/><rect x="65" y="2" width="2.5" height="2.5" fill="#9cb"/><rect x="70" y="2" width="2.5" height="2.5" fill="#c66"/><rect x="75" y="2" width="2.5" height="2.5" fill="#aaa"/>
<rect x="75" y="8" width="1.3" height="80" fill="#535353"/>
<rect x="76.6" y="8" width="117.4" height="4.5" fill="#666"/>
<rect x="76.6" y="13.4" width="28" height="5.6" fill="#9a9a9a"/>
<rect x="104.6" y="13.4" width="89.4" height="5.6" fill="#7c7c7c"/>
<rect x="104.4" y="8" width="0.6" height="65" fill="#555"/>
<g fill="#cfcfcf" font-size="2.9" font-family="Liberation Sans">
<text x="22" y="11.5">Filters</text><text x="37" y="17.5">All</text><text x="34" y="22.5">All Used Layers</text>
<text x="77.5" y="11.5">S..</text><text x="85" y="11.5">Name</text><text x="107" y="11.5">O..</text><text x="113" y="11.5">Fre..</text><text x="122" y="11.5">L..</text><text x="132" y="11.5">Color</text><text x="144" y="11.5">Linetype</text><text x="157" y="11.5">Lineweig..</text><text x="180" y="11.5">Trans</text>
</g>
<rect x="32.5" y="14.5" width="5" height="3.5" fill="#ddd"/>
<path d="M28 15v3h3" stroke="#6c6" stroke-width="0.6" fill="none"/>
<g font-size="2.9" font-family="Liberation Sans" fill="#d8d8d8">
<rect x="78.5" y="15.0" width="2" height="1.5" fill="#8ab"/>
<text x="86" y="17.0">0</text>
<rect x="108.5" y="14.5" width="1" height="2.5" fill="#f0e080"/>
<circle cx="116" cy="15.8" r="1.3" fill="#f0e8b0"/>
<rect x="124" y="14.7" width="2" height="2" fill="#e0b040"/>
<rect x="133.5" y="14.6" width="2.5" height="2.5" fill="#ffffff"/>
<text x="137" y="17.0">wh..</text><text x="146" y="17.0">Continu...</text>
<path d="M164 16.0H170" stroke="#ddd" stroke-width="0.5"/><text x="172" y="17.0">Defa..</text><text x="185" y="17.0">0</text>
</g>
<g font-size="2.9" font-family="Liberation Sans" fill="#d8d8d8">
<rect x="78.5" y="21.2" width="2" height="1.5" fill="#8ab"/>
<text x="86" y="23.2">Defpoints</text>
<rect x="108.5" y="20.7" width="1" height="2.5" fill="#f0e080"/>
<circle cx="116" cy="22.0" r="1.3" fill="#f0e8b0"/>
<rect x="124" y="20.9" width="2" height="2" fill="#e0b040"/>
<rect x="133.5" y="20.8" width="2.5" height="2.5" fill="#ffffff"/>
<text x="137" y="23.2">wh..</text><text x="146" y="23.2">Continu...</text>
<path d="M164 22.2H170" stroke="#ddd" stroke-width="0.5"/><text x="172" y="23.2">Defa..</text><text x="185" y="23.2">0</text>
</g>
<g font-size="2.9" font-family="Liberation Sans" fill="#d8d8d8">
<rect x="78.5" y="27.4" width="2" height="1.5" fill="#8ab"/>
<text x="86" y="29.4">Doors</text>
<rect x="108.5" y="26.9" width="1" height="2.5" fill="#f0e080"/>
<circle cx="116" cy="28.2" r="1.3" fill="#f0e8b0"/>
<rect x="124" y="27.099999999999998" width="2" height="2" fill="#e0b040"/>
<rect x="133.5" y="27.0" width="2.5" height="2.5" fill="#2040e0"/>
<text x="137" y="29.4">blue</text><text x="146" y="29.4">Continu...</text>
<path d="M164 28.4H170" stroke="#ddd" stroke-width="0.5"/><text x="172" y="29.4">Defa..</text><text x="185" y="29.4">0</text>
</g>
<g font-size="2.9" font-family="Liberation Sans" fill="#d8d8d8">
<rect x="78.5" y="33.6" width="2" height="1.5" fill="#8ab"/>
<text x="86" y="35.6">Viewport</text>
<rect x="108.5" y="33.1" width="1" height="2.5" fill="#f0e080"/>
<circle cx="116" cy="34.4" r="1.3" fill="#f0e8b0"/>
<rect x="124" y="33.300000000000004" width="2" height="2" fill="#e0b040"/>
<rect x="133.5" y="33.2" width="2.5" height="2.5" fill="#ffffff"/>
<text x="137" y="35.6">wh..</text><text x="146" y="35.6">Continu...</text>
<path d="M164 34.6H170" stroke="#ddd" stroke-width="0.5"/><text x="172" y="35.6">Defa..</text><text x="185" y="35.6">0</text>
</g>
<g font-size="2.9" font-family="Liberation Sans" fill="#d8d8d8">
<rect x="78.5" y="39.8" width="2" height="1.5" fill="#6c6"/>
<text x="86" y="41.8">Wall</text>
<rect x="108.5" y="39.3" width="1" height="2.5" fill="#f0e080"/>
<circle cx="116" cy="40.599999999999994" r="1.3" fill="#f0e8b0"/>
<rect x="124" y="39.5" width="2" height="2" fill="#e0b040"/>
<rect x="133.5" y="39.4" width="2.5" height="2.5" fill="#e02020"/>
<text x="137" y="41.8">red</text><text x="146" y="41.8">Continu...</text>
<path d="M164 40.8H170" stroke="#ddd" stroke-width="0.5"/><text x="172" y="41.8">Defa..</text><text x="185" y="41.8">0</text>
</g>
<g font-size="2.9" font-family="Liberation Sans" fill="#d8d8d8">
<rect x="78.5" y="46.0" width="2" height="1.5" fill="#8ab"/>
<text x="86" y="48.0">Windows</text>
<rect x="108.5" y="45.5" width="1" height="2.5" fill="#f0e080"/>
<circle cx="116" cy="46.8" r="1.3" fill="#f0e8b0"/>
<rect x="124" y="45.7" width="2" height="2" fill="#e0b040"/>
<rect x="133.5" y="45.6" width="2.5" height="2.5" fill="#e8b020"/>
<text x="137" y="48.0">40</text><text x="146" y="48.0">Continu...</text>
<path d="M164 47.0H170" stroke="#ddd" stroke-width="0.5"/><text x="172" y="48.0">Defa..</text><text x="185" y="48.0">0</text>
</g>
<rect x="76.6" y="73.5" width="117.4" height="4.2" fill="#f2eaea"/>
<text x="77.5" y="76.8" font-size="2.6" fill="#555" font-family="Liberation Sans">⚲</text>
<rect x="21" y="72.5" width="2.6" height="2.6" fill="#eee"/>
<text x="25" y="75" font-size="2.7" fill="#ccc" font-family="Liberation Sans">Invert filter</text>
<text x="22" y="83.3" font-size="2.7" fill="#ccc" font-family="Liberation Sans">All: 6 layers displayed of 6 total layers</text>
</svg></div>
<div class="im" id="i4" style="left:10px;top:368px;width:362px;height:178px;background:#1f2530"><svg width="362" height="178" viewBox="0 0 362 178" style="left:0;top:0">
<defs><pattern id="g4" x="2" y="2" width="16" height="16" patternUnits="userSpaceOnUse"><rect width="16" height="16" fill="#1f2530"/><path d="M0 0.5H16M0.5 0V16" stroke="#232a34" stroke-width="1"/></pattern></defs>
<rect width="362" height="178" fill="url(#g4)"/>
<rect x="0" y="0" width="362" height="8" fill="#a9a9a9"/>
<rect x="0" y="0" width="194" height="8" fill="#f0f0f0"/>
<rect x="0" y="3.2" width="194" height="4.8" fill="#e6e6e6"/>
<rect x="0" y="8" width="362" height="1" fill="#8c8c8c"/>
<g fill="#555" font-size="2.6" font-family="Liberation Sans"><text x="9" y="6.6">Ось ▾</text><text x="20" y="6.6">Изменить таблицу ▾</text><text x="69" y="6.6">Мультивыноски ▾</text><text x="106" y="6.6">Объекты штамп ▾</text><text x="150" y="6.6">Функции ▾</text></g>
<g stroke="#c8c8c8" stroke-width="0.5"><path d="M28 0.5V8M53 0.5V8M99 0.5V8M146 0.5V8M184 0.5V8"/></g>
<g fill="#777"><rect x="8.5" y="0.8" width="2" height="1.6"/><rect x="12" y="0.8" width="2" height="1.6"/><rect x="70" y="0.8" width="2" height="1.6"/><rect x="76" y="0.8" width="2" height="1.6"/><rect x="81" y="0.8" width="2" height="1.6"/><rect x="107" y="0.8" width="2" height="1.6"/><rect x="114" y="0.8" width="2" height="1.6"/><rect x="120" y="0.5" width="2.5" height="2" fill="#e8d040"/><rect x="146" y="0.8" width="2" height="1.6"/><rect x="176" y="0.8" width="2" height="1.6"/></g>
<rect x="194" y="0" width="168" height="1.2" fill="#d8d8d8"/>
<rect x="0" y="0" width="1.3" height="178" fill="#1e2440"/>
<rect x="1.3" y="9" width="49.7" height="169" fill="#ffffff"/>
<rect x="1.3" y="9" width="49.7" height="4" fill="#c9c9c9"/>
<text x="4" y="12" font-size="2.4" fill="#333" font-family="Liberation Sans">ТУЛБ Tool Palettes</text>
<rect x="1.3" y="13" width="49.7" height="4" fill="#e8e8e8"/>
<rect x="3" y="14" width="2" height="2" fill="#d03030"/><rect x="6.5" y="14" width="2.5" height="2" fill="#e8c040"/><rect x="12" y="14" width="2.5" height="2" fill="#8ab"/><rect x="16" y="14" width="2.5" height="2" fill="#8ab"/><rect x="22" y="14" width="2" height="2" fill="#aaa"/><rect x="27" y="14" width="2" height="2" fill="#aaa"/><rect x="32" y="14" width="2" height="2" fill="#aaa"/>
<rect x="3" y="18.1" width="2.4" height="1.8" fill="#6a9ad0"/>
<rect x="6.2" y="18.5" width="14.6" height="1" fill="#5a5a5a"/>
<rect x="0.5" y="18.5" width="1.2" height="1.2" fill="#bbb"/>
<rect x="6" y="21.12" width="2.4" height="1.8" fill="#e8c860"/>
<rect x="9.2" y="21.52" width="13.2" height="1" fill="#5a5a5a"/>
<rect x="3.5" y="21.52" width="1.2" height="1.2" fill="#bbb"/>
<rect x="6" y="24.14" width="2.4" height="1.8" fill="#e8c860"/>
<rect x="9.2" y="24.54" width="17.2" height="1" fill="#5a5a5a"/>
<rect x="3.5" y="24.54" width="1.2" height="1.2" fill="#bbb"/>
<rect x="6" y="27.16" width="2.4" height="1.8" fill="#e8c860"/>
<rect x="9.2" y="27.56" width="12.6" height="1" fill="#5a5a5a"/>
<rect x="3.5" y="27.56" width="1.2" height="1.2" fill="#bbb"/>
<rect x="6" y="30.18" width="2.4" height="1.8" fill="#e8c860"/>
<rect x="9.2" y="30.58" width="16.3" height="1" fill="#5a5a5a"/>
<rect x="3.5" y="30.58" width="1.2" height="1.2" fill="#bbb"/>
<rect x="9" y="33.2" width="2.4" height="1.8" fill="#e8c860"/>
<rect x="12.2" y="33.6" width="14.9" height="1" fill="#5a5a5a"/>
<rect x="6.5" y="33.6" width="1.2" height="1.2" fill="#bbb"/>
<rect x="9" y="36.220000000000006" width="2.4" height="1.8" fill="#e8c860"/>
<rect x="12.2" y="36.620000000000005" width="12.5" height="1" fill="#5a5a5a"/>
<rect x="6.5" y="36.620000000000005" width="1.2" height="1.2" fill="#bbb"/>
<rect x="12" y="39.24000000000001" width="2.4" height="1.8" fill="#e8c860"/>
<rect x="15.2" y="39.64000000000001" width="16.1" height="1" fill="#5a5a5a"/>
<rect x="9.5" y="39.64000000000001" width="1.2" height="1.2" fill="#bbb"/>
<rect x="15" y="42.26000000000001" width="2.4" height="1.8" fill="#e8c860"/>
<rect x="18.2" y="42.66000000000001" width="12.3" height="1" fill="#5a5a5a"/>
<rect x="12.5" y="42.66000000000001" width="1.2" height="1.2" fill="#bbb"/>
<rect x="15" y="45.280000000000015" width="2.4" height="1.8" fill="#e8c860"/>
<rect x="18.2" y="45.680000000000014" width="15.5" height="1" fill="#5a5a5a"/>
<rect x="12.5" y="45.680000000000014" width="1.2" height="1.2" fill="#bbb"/>
<rect x="18" y="48.30000000000002" width="2.4" height="1.8" fill="#7aa0c8"/>
<rect x="21.2" y="48.70000000000002" width="12.6" height="1" fill="#5a5a5a"/>
<rect x="18" y="51.32000000000002" width="2.4" height="1.8" fill="#7aa0c8"/>
<rect x="21.2" y="51.72000000000002" width="12.7" height="1" fill="#5a5a5a"/>
<rect x="18" y="54.340000000000025" width="2.4" height="1.8" fill="#7aa0c8"/>
<rect x="21.2" y="54.74000000000002" width="15.4" height="1" fill="#5a5a5a"/>
<rect x="18" y="57.36000000000003" width="2.4" height="1.8" fill="#7aa0c8"/>
<rect x="21.2" y="57.760000000000026" width="18.6" height="1" fill="#5a5a5a"/>
<rect x="18" y="60.38000000000003" width="2.4" height="1.8" fill="#7aa0c8"/>
<rect x="21.2" y="60.78000000000003" width="13.0" height="1" fill="#5a5a5a"/>
<rect x="18" y="63.40000000000003" width="2.4" height="1.8" fill="#7aa0c8"/>
<rect x="21.2" y="63.800000000000026" width="13.8" height="1" fill="#5a5a5a"/>
<rect x="18" y="66.42000000000002" width="2.4" height="1.8" fill="#7aa0c8"/>
<rect x="21.2" y="66.82000000000002" width="17.0" height="1" fill="#5a5a5a"/>
<rect x="18" y="69.44000000000001" width="2.4" height="1.8" fill="#7aa0c8"/>
<rect x="21.2" y="69.84000000000002" width="19.6" height="1" fill="#5a5a5a"/>
<rect x="18" y="72.46000000000001" width="2.4" height="1.8" fill="#7aa0c8"/>
<rect x="21.2" y="72.86000000000001" width="16.6" height="1" fill="#5a5a5a"/>
<rect x="18" y="75.48" width="2.4" height="1.8" fill="#7aa0c8"/>
<rect x="21.2" y="75.88000000000001" width="15.2" height="1" fill="#5a5a5a"/>
<rect x="18" y="78.5" width="2.4" height="1.8" fill="#7aa0c8"/>
<rect x="21.2" y="78.9" width="19.8" height="1" fill="#5a5a5a"/>
<rect x="18" y="81.52" width="2.4" height="1.8" fill="#7aa0c8"/>
<rect x="21.2" y="81.92" width="12.4" height="1" fill="#5a5a5a"/>
<rect x="18" y="84.53999999999999" width="2.4" height="1.8" fill="#7aa0c8"/>
<rect x="21.2" y="84.94" width="18.9" height="1" fill="#5a5a5a"/>
<rect x="18" y="87.55999999999999" width="2.4" height="1.8" fill="#7aa0c8"/>
<rect x="21.2" y="87.96" width="14.3" height="1" fill="#5a5a5a"/>
<rect x="18" y="90.57999999999998" width="2.4" height="1.8" fill="#7aa0c8"/>
<rect x="21.2" y="90.97999999999999" width="13.2" height="1" fill="#5a5a5a"/>
<rect x="15" y="93.59999999999998" width="2.4" height="1.8" fill="#e8c860"/>
<rect x="18.2" y="93.99999999999999" width="12.9" height="1" fill="#5a5a5a"/>
<rect x="12.5" y="93.99999999999999" width="1.2" height="1.2" fill="#bbb"/>
<rect x="15" y="96.61999999999998" width="2.4" height="1.8" fill="#e8c860"/>
<rect x="18.2" y="97.01999999999998" width="14.5" height="1" fill="#5a5a5a"/>
<rect x="12.5" y="97.01999999999998" width="1.2" height="1.2" fill="#bbb"/>
<rect x="15" y="99.63999999999997" width="2.4" height="1.8" fill="#e8c860"/>
<rect x="18.2" y="100.03999999999998" width="18.5" height="1" fill="#5a5a5a"/>
<rect x="12.5" y="100.03999999999998" width="1.2" height="1.2" fill="#bbb"/>
<rect x="18" y="102.65999999999997" width="2.4" height="1.8" fill="#7aa0c8"/>
<rect x="21.2" y="103.05999999999997" width="13.4" height="1" fill="#5a5a5a"/>
<rect x="18" y="105.67999999999996" width="2.4" height="1.8" fill="#d8c070"/>
<rect x="21.2" y="106.07999999999997" width="16.7" height="1" fill="#5a5a5a"/>
<rect x="21" y="108.69999999999996" width="2.4" height="1.8" fill="#d8c070"/>
<rect x="24.2" y="109.09999999999997" width="17.1" height="1" fill="#5a5a5a"/>
<rect x="21" y="111.71999999999996" width="2.4" height="1.8" fill="#d8c070"/>
<rect x="24.2" y="112.11999999999996" width="15.0" height="1" fill="#5a5a5a"/>
<rect x="15" y="114.73999999999995" width="2.4" height="1.8" fill="#e8c860"/>
<rect x="18.2" y="115.13999999999996" width="16.4" height="1" fill="#5a5a5a"/>
<rect x="12.5" y="115.13999999999996" width="1.2" height="1.2" fill="#bbb"/>
<rect x="18" y="117.75999999999995" width="2.4" height="1.8" fill="#7aa0c8"/>
<rect x="21.2" y="118.15999999999995" width="12.5" height="1" fill="#5a5a5a"/>
<rect x="18" y="120.77999999999994" width="2.4" height="1.8" fill="#7aa0c8"/>
<rect x="21.2" y="121.17999999999995" width="12.5" height="1" fill="#5a5a5a"/>
<rect x="18" y="123.79999999999994" width="2.4" height="1.8" fill="#7aa0c8"/>
<rect x="21.2" y="124.19999999999995" width="13.6" height="1" fill="#5a5a5a"/>
<rect x="18" y="126.81999999999994" width="2.4" height="1.8" fill="#7aa0c8"/>
<rect x="21.2" y="127.21999999999994" width="17.4" height="1" fill="#5a5a5a"/>
<rect x="18" y="129.83999999999995" width="2.4" height="1.8" fill="#7aa0c8"/>
<rect x="21.2" y="130.23999999999995" width="15.4" height="1" fill="#5a5a5a"/>
<rect x="18" y="132.85999999999996" width="2.4" height="1.8" fill="#7aa0c8"/>
<rect x="21.2" y="133.25999999999996" width="14.5" height="1" fill="#5a5a5a"/>
<rect x="18" y="135.87999999999997" width="2.4" height="1.8" fill="#7aa0c8"/>
<rect x="21.2" y="136.27999999999997" width="16.7" height="1" fill="#5a5a5a"/>
<rect x="18" y="138.89999999999998" width="2.4" height="1.8" fill="#7aa0c8"/>
<rect x="21.2" y="139.29999999999998" width="15.6" height="1" fill="#5a5a5a"/>
<rect x="18" y="141.92" width="2.4" height="1.8" fill="#7aa0c8"/>
<rect x="21.2" y="142.32" width="14.4" height="1" fill="#5a5a5a"/>
<rect x="18" y="144.94" width="2.4" height="1.8" fill="#7aa0c8"/>
<rect x="21.2" y="145.34" width="18.4" height="1" fill="#5a5a5a"/>
<rect x="18" y="147.96" width="2.4" height="1.8" fill="#7aa0c8"/>
<rect x="21.2" y="148.36" width="17.6" height="1" fill="#5a5a5a"/>
<rect x="18" y="150.98000000000002" width="2.4" height="1.8" fill="#7aa0c8"/>
<rect x="21.2" y="151.38000000000002" width="14.0" height="1" fill="#5a5a5a"/>
<rect x="18" y="154.00000000000003" width="2.4" height="1.8" fill="#7aa0c8"/>
<rect x="21.2" y="154.40000000000003" width="16.6" height="1" fill="#5a5a5a"/>
<rect x="15" y="157.02000000000004" width="2.4" height="1.8" fill="#e8c860"/>
<rect x="18.2" y="157.42000000000004" width="16.2" height="1" fill="#5a5a5a"/>
<rect x="12.5" y="157.42000000000004" width="1.2" height="1.2" fill="#bbb"/>
<rect x="15" y="160.04000000000005" width="2.4" height="1.8" fill="#e8c860"/>
<rect x="18.2" y="160.44000000000005" width="19.0" height="1" fill="#5a5a5a"/>
<rect x="12.5" y="160.44000000000005" width="1.2" height="1.2" fill="#bbb"/>
<rect x="12" y="163.06000000000006" width="2.4" height="1.8" fill="#e8c860"/>
<rect x="15.2" y="163.46000000000006" width="17.8" height="1" fill="#5a5a5a"/>
<rect x="9.5" y="163.46000000000006" width="1.2" height="1.2" fill="#bbb"/>
<rect x="6" y="166.08000000000007" width="2.4" height="1.8" fill="#e8c860"/>
<rect x="9.2" y="166.48000000000008" width="14.3" height="1" fill="#5a5a5a"/>
<rect x="3.5" y="166.48000000000008" width="1.2" height="1.2" fill="#bbb"/>
<rect x="6" y="169.10000000000008" width="2.4" height="1.8" fill="#e8c860"/>
<rect x="9.2" y="169.50000000000009" width="19.8" height="1" fill="#5a5a5a"/>
<rect x="3.5" y="169.50000000000009" width="1.2" height="1.2" fill="#bbb"/>
<rect x="6" y="172.1200000000001" width="2.4" height="1.8" fill="#e8c860"/>
<rect x="9.2" y="172.5200000000001" width="12.9" height="1" fill="#5a5a5a"/>
<rect x="3.5" y="172.5200000000001" width="1.2" height="1.2" fill="#bbb"/>
<rect x="45" y="17" width="4.6" height="155" fill="#f4f4f4" stroke="#d8d8d8" stroke-width="0.3"/>
<rect x="45.5" y="20" width="3.6" height="20" fill="#e6e6e6" stroke="#bbb" stroke-width="0.3"/>
<rect x="49.5" y="9" width="3.7" height="169" fill="#c4c4c4"/>
<g fill="#ececec"><rect x="49.8" y="20" width="3" height="10"/><rect x="49.8" y="34" width="3" height="10"/><rect x="49.8" y="48" width="3" height="8"/><rect x="49.8" y="62" width="3" height="12"/></g>
<rect x="53.2" y="9" width="1" height="169" fill="#6a6a6a"/>
<rect x="56.5" y="10.3" width="26" height="13.9" fill="#d4d4d4" stroke="#999" stroke-width="0.4"/>
<rect x="56.5" y="10.3" width="26" height="2.8" fill="#2e4a80"/>
<rect x="59" y="15" width="3" height="3" fill="#8a96a8"/><rect x="63" y="15" width="3" height="3" fill="#8a96a8"/><rect x="68" y="15" width="8" height="3" fill="#fff" stroke="#999" stroke-width="0.3"/><rect x="76.5" y="15" width="2" height="3" fill="#777"/>
<path d="M88 9V174" stroke="#4a525e" stroke-width="1"/>
<g fill="none" stroke="#b4b8be" stroke-width="0.5">
<path d="M99.5 10.3H321.6V170.5H92.7V85H99.5M99.5 10.3V170.5M95.6 85V170.5M97.5 85V122"/>
<path d="M92.7 90H99.5M92.7 94.6H99.5M92.7 99.4H99.5M92.7 104H99.5M92.7 110H99.5M92.7 122H99.5M92.7 139.8H99.5M92.7 156.4H99.5"/>
</g>
<text transform="translate(94.6 120) rotate(-90)" font-size="2" fill="#aaa" font-family="Liberation Sans">Справ. №</text>
<text transform="translate(94.6 168) rotate(-90)" font-size="2" fill="#aaa" font-family="Liberation Sans">Подп. и дата  Инв. №</text>
<g fill="none" stroke="#b4b8be" stroke-width="0.5">
<path d="M151.4 31.5H157.1V33H151.4Z"/>
<path d="M149.8 33H159.6V52M149.8 33V52"/>
<path d="M145.7 52H164.5V54.5H145.7Z"/>
<path d="M150.6 54.5V75M158.8 54.5V75"/>
<path d="M146.5 75H162.8V147.7H146.5Z"/>
<path d="M131.8 131.4H177.6V134.6H131.8ZM131.8 134.6L150 147.7M177.6 134.6L159 147.7M150 147.7H159"/>
<path d="M131.8 134.6V160M177.6 134.6V160M131.8 159.2H177.6"/>
<path d="M167 31.5H195.7V148.4H167"/>
<path d="M227.5 62L230 60H280.5L283 62V75H227.5V62ZM237 60V75M247.9 60V75M259.5 60V75M227.5 75V90.5M271.9 75V90.5M290.1 60V75M283 60H290.1M283 75H290.1"/>
<path d="M290.1 60V75"/>
<path d="M227.5 90.5H271.9"/>
<path d="M217.3 139.3H322.4M217.3 139.3V170.8"/>
<path d="M223.9 139.3V170.8"/>
<path d="M229.7 139.3V170.8"/>
<path d="M235.5 139.3V170.8"/>
<path d="M240.4 139.3V170.8"/>
<path d="M248.7 139.3V170.8"/>
<path d="M254.5 139.3V170.8"/>
<path d="M217.3 142.3H254.5"/>
<path d="M217.3 145.3H254.5"/>
<path d="M217.3 148.3H254.5"/>
<path d="M217.3 151.3H254.5"/>
<path d="M217.3 154.3H254.5"/>
<path d="M217.3 157.3H254.5"/>
<path d="M217.3 160.3H254.5"/>
<path d="M217.3 163.3H254.5"/>
<path d="M217.3 166.3H254.5"/>
<path d="M254.5 144.3H322.4M254.5 153.4H322.4M254.5 161.7H322.4M294.2 153.4V170.8M302.5 153.4V157.5M310.8 153.4V157.5M294.2 157.5H322.4"/>
</g>
<path d="M153.9 32V147.7" stroke="#a02020" stroke-width="0.6"/>
<path d="M254.6 111.2H272.6M263.6 102.2V120.2" stroke="#c0c4c8" stroke-width="0.5"/>
<rect x="210.6" y="17.5" width="61.3" height="4.5" fill="#f4f4f4" stroke="#999" stroke-width="0.3"/>
<g fill="#666"><rect x="212" y="18.5" width="2" height="2.5"/><rect x="216" y="19" width="3" height="1.5"/><rect x="221" y="18.5" width="2" height="2.5"/><rect x="225" y="18.5" width="3" height="2.5"/><rect x="230" y="18.5" width="2" height="2.5"/><rect x="235" y="18.5" width="3" height="2.5"/><rect x="240" y="19" width="8" height="1.5"/><rect x="250" y="18.5" width="2" height="2.5"/><rect x="254" y="18.5" width="3" height="2.5"/><rect x="259" y="18.5" width="2" height="2.5"/><rect x="263" y="18.5" width="6" height="2.5"/></g>
<path d="M57.3 158.4V169.8H68.7" stroke="#a0a4a8" stroke-width="0.5" fill="none"/>
<path d="M324.9 9V174" stroke="#4a5060" stroke-width="0.6"/>
<circle cx="343.9" cy="24.5" r="10.4" fill="none" stroke="#4e5560" stroke-width="2"/>
<rect x="339.3" y="19.5" width="9.6" height="10" fill="#c0c0c0"/>
<text x="341.5" y="25.5" font-size="2.5" fill="#777" font-family="Liberation Sans">TOP</text>
<g font-size="4" fill="#c0c4c8" font-family="Liberation Sans" font-weight="bold"><text x="342.5" y="15.5">N</text><text x="342.5" y="37.3">S</text><text x="354" y="26">E</text><text x="331" y="26">W</text></g>
<rect x="339.8" y="41" width="9.1" height="3.4" rx="1" fill="#9aa0a8"/>
<rect x="353" y="49.3" width="5.8" height="40" fill="#5a5e66"/>
<rect x="359.2" y="0" width="1.3" height="178" fill="#85889a"/><rect x="360.5" y="0" width="1.5" height="178" fill="#3a3c58"/>
<rect x="53.2" y="174" width="308.8" height="4" fill="#e6e6de"/>
<rect x="53.2" y="174.5" width="12" height="3.5" fill="#d0d0d0"/><rect x="65.5" y="174.5" width="8" height="3.5" fill="#ffffff"/><rect x="73.8" y="174.5" width="22" height="3.5" fill="#d8d8d8"/>
<text x="54" y="177.3" font-size="2.4" fill="#555" font-family="Liberation Sans">Модель</text><text x="66" y="177.3" font-size="2.4" fill="#333" font-family="Liberation Sans">Лист</text><text x="75" y="177.3" font-size="2.4" fill="#555" font-family="Liberation Sans">Лист1 / Лист2</text>
</svg></div>
<div class="im" id="i5" style="left:375px;top:368px;width:357px;height:178px;background:#22262e"><svg width="357" height="178" viewBox="0 0 357 178" style="left:0;top:0">
<rect width="357" height="178" fill="#22262e"/>
<g fill="none" stroke="#9430b0" stroke-width="0.9">
<rect x="172" y="32.6" width="18" height="17.4" rx="3"/>
<rect x="172" y="56.8" width="18" height="17.4" rx="3"/>

<rect x="212.8" y="32.6" width="18" height="17.4" rx="3"/>
<rect x="212.8" y="56.8" width="18" height="17.4" rx="3"/>
<rect x="212.8" y="80.8" width="18" height="17.4" rx="3"/>
<rect x="253.3" y="32.6" width="18" height="17.4" rx="3"/>
<rect x="253.3" y="56.8" width="18" height="17.4" rx="3"/>
<rect x="253.3" y="80.8" width="18" height="17.4" rx="3"/>
<rect x="293.9" y="32.6" width="18" height="17.4" rx="3"/>
<rect x="293.9" y="56.8" width="18" height="17.4" rx="3"/>
<rect x="293.9" y="80.8" width="18" height="17.4" rx="3"/>
<rect x="335.3" y="32.6" width="18" height="17.4" rx="3"/>
<rect x="335.3" y="56.8" width="18" height="17.4" rx="3"/>
<rect x="335.3" y="80.8" width="18" height="17.4" rx="3"/>
</g>
<rect x="172" y="80.8" width="18" height="17.4" rx="3" fill="none" stroke="#d8b8d8" stroke-width="1"/>

<rect x="0" y="0" width="357" height="28" fill="#3c3c3c"/>
<rect x="0" y="0" width="312" height="22.8" fill="#555555"/>
<rect x="0" y="22.8" width="203.7" height="5.2" fill="#4a4a4a"/>
<rect x="203.7" y="0" width="108.3" height="28" fill="#3c3c3c"/>
<rect x="204.2" y="0.3" width="21.3" height="27.5" fill="#595959"/>
<rect x="204.2" y="22.8" width="21.3" height="5" fill="#4e4e4e"/>
<rect x="226.5" y="0.3" width="16.4" height="27.5" fill="#595959"/>
<rect x="226.5" y="22.8" width="16.4" height="5" fill="#4e4e4e"/>
<rect x="244.7" y="0.3" width="14.8" height="27.5" fill="#595959"/>
<rect x="244.7" y="22.8" width="14.8" height="5" fill="#4e4e4e"/>
<rect x="261.3" y="0.3" width="15.5" height="27.5" fill="#595959"/>
<rect x="261.3" y="22.8" width="15.5" height="5" fill="#4e4e4e"/>
<rect x="278.7" y="0.3" width="16.3" height="27.5" fill="#595959"/>
<rect x="278.7" y="22.8" width="16.3" height="5" fill="#4e4e4e"/>
<rect x="296.9" y="0.3" width="14.6" height="27.5" fill="#595959"/>
<rect x="296.9" y="22.8" width="14.6" height="5" fill="#4e4e4e"/>
<rect x="0" y="0" width="357" height="0.6" fill="#2a2a2a"/>
<g stroke="#464646" stroke-width="0.6"><path d="M63 1V28M100 1V28M126 1V28"/></g>
<path d="M2 13L12 3" stroke="#9aa8b8" stroke-width="0.8"/>
<path d="M17 13H22A4 4 0 0 0 22 5" stroke="#9aa8b8" stroke-width="0.8" fill="none"/>
<circle cx="33" cy="8" r="4.2" fill="#e8eaf0"/><circle cx="32" cy="7" r="2" fill="#fff"/>
<path d="M44 14Q45 5 52 3" stroke="#9aa8b8" stroke-width="0.8" fill="none"/>
<g fill="#8fb3dd"><rect x="54" y="2.5" width="3" height="2"/><rect x="54" y="8" width="3" height="2"/><rect x="54" y="13" width="3" height="2.5"/><rect x="66" y="2.5" width="3" height="3"/><rect x="72" y="2.5" width="3" height="3" fill="#bbb"/><rect x="82" y="2.5" width="3" height="3"/><rect x="92" y="2.5" width="3" height="3" fill="#e8b040"/><rect x="66" y="8" width="3" height="3"/><rect x="73" y="8" width="3" height="3" fill="#ccc"/><rect x="82" y="8" width="3" height="3"/><rect x="92" y="8" width="3" height="3" fill="#ccd"/><rect x="66" y="14" width="3" height="3"/><rect x="73" y="14" width="3" height="3"/><rect x="82" y="14" width="3" height="3"/><rect x="92" y="14" width="3" height="3" fill="#aab"/></g>
<text x="103" y="13" font-size="11" fill="#e8e8e8" font-family="Liberation Sans">A</text>
<g fill="#bbb"><rect x="116" y="3" width="5" height="1.5"/><rect x="116" y="9" width="3" height="3"/><rect x="118" y="15" width="4" height="3" fill="#ccc"/><rect x="132" y="3" width="5" height="6" fill="#ccd"/><rect x="135" y="6" width="3" height="5" fill="#9ab"/></g>
<g fill="#e8d050"><rect x="147" y="2.5" width="2" height="2.5"/><rect x="162" y="8" width="2.5" height="2.5" fill="#8ab"/><rect x="150" y="15" width="2.5" height="2.5"/><rect x="157" y="15" width="2.5" height="2.5" fill="#8ab"/><rect x="164" y="15" width="2.5" height="2.5"/><rect x="150" y="8" width="2.5" height="2.5" fill="#8ab"/><rect x="171" y="8" width="2.5" height="2.5"/><rect x="178" y="8" width="2.5" height="2.5" fill="#9ab"/></g>
<rect x="153" y="2" width="50" height="3.6" fill="#4a4a4a"/><rect x="159" y="2.5" width="2.5" height="2.5" fill="#eee"/>
<g fill="#c8c8c8" font-size="2.8" font-family="Liberation Sans">
<text x="2" y="18">Line</text><text x="13" y="18">Polyline</text><text x="28" y="18">Circle</text><text x="44" y="18">Arc</text><text x="103" y="18">Text</text><text x="130" y="18">Layer</text><text x="128" y="21">Properties</text>
<text x="26" y="26.5">Draw ▾</text><text x="75" y="26.5">Modify ▾</text><text x="103" y="26.5">Annotation ▾</text><text x="162" y="26.5">Layers ▾</text><text x="207" y="26.5">Block ▾</text>
<text x="207" y="14">Insert</text><text x="226.5" y="14">Properties</text><text x="246" y="9">Groups</text><text x="262" y="14">Utilities</text><text x="278.5" y="14">Clipboard</text><text x="299" y="14">View</text>
</g>
<rect x="208" y="3" width="6" height="5" rx="1.5" fill="#b8c8e0"/>
<circle cx="234.5" cy="8" r="4" fill="#e05050"/><path d="M234.5 4A4 4 0 0 1 238.5 8L234.5 8Z" fill="#f0d040"/><path d="M238.5 8A4 4 0 0 1 234.5 12L234.5 8Z" fill="#50c050"/><path d="M234.5 12A4 4 0 0 1 230.5 8L234.5 8Z" fill="#4070e0"/><circle cx="234.5" cy="8" r="1.4" fill="#eee"/>
<rect x="266" y="4" width="4.5" height="7" fill="#bbb"/><rect x="284" y="3" width="5" height="8" fill="#ccc"/><rect x="300" y="5" width="6" height="4.5" fill="#ddd"/>
<rect x="0" y="28" width="357" height="8.3" fill="#303030"/>
<path d="M5 36.3L8 29.5H39.5L41 36.3Z" fill="#555"/>
<text x="10" y="34.3" font-size="2.8" fill="#bbb" font-family="Liberation Sans">annotation*</text>
<rect x="42.5" y="30" width="6" height="6" rx="2" fill="#3e3e3e"/>
<rect x="96" y="36.3" width="261" height="1.2" fill="#6a6a6a"/>
<text x="97" y="42" font-size="2.9" fill="#d0d0d0" font-family="Liberation Sans">[-][Top][2D Wireframe]</text>
<path d="M129 37L134 36.5M127.3 42L150.2 52.8L125.7 65L148.6 77.4" stroke="#b0b840" stroke-width="1" fill="none"/>
<path d="M146.1 78V125.6M151 78V125.6" stroke="#2838a0" stroke-width="0.8"/>
<path d="M96 95.5H357" stroke="#c8ccd0" stroke-width="0.6"/>
<path d="M172.3 37.4V178" stroke="#9aa0a8" stroke-width="0.5"/>
<defs><pattern id="h5" width="3" height="3" patternUnits="userSpaceOnUse" patternTransform="rotate(45)"><rect width="3" height="3" fill="#22262e"/><rect width="0.7" height="3" fill="#9a9ea4"/></pattern></defs>
<path d="M146.1 125.6H216V130.2H151V178H146.1Z" fill="url(#h5)" stroke="#c8ccd0" stroke-width="0.5"/>
<rect x="216" y="125.3" width="141" height="4.9" fill="url(#h5)" stroke="#d0d4d8" stroke-width="0.5"/>
<rect x="176.5" y="100.4" width="39.5" height="29.8" fill="#eef0f6"/>
<g font-size="2.8" font-family="Liberation Sans" fill="#777"><text x="178" y="105.5" fill="#555" font-weight="bold">Block Reference</text><text x="178" y="112">Color</text><text x="178" y="118">Layer</text><text x="178" y="124">Linetype</text><text x="195" y="112">ByLayer</text><text x="195" y="118">Chair</text><text x="195" y="124">ByLayer</text></g>
<circle cx="193.5" cy="111" r="1.2" fill="#b000c0"/>
<g fill="none" stroke="#c01828" stroke-width="1.1">
<path d="M179 135L183 138L180 141L184 144L180 147L184 150L180 153L183 156L180 159M185 135L181 138L184 141L180 144L184 147L180 150L184 153L181 156L184 159"/>
<circle cx="182" cy="163.7" r="4.2"/>
<path d="M176 166L171 168L168 172L164 170L160 174L162 178M188 166L193 168L196 172L200 170L204 174L202 178"/>
</g>
<path d="M100.3 162.5V176.4H115" stroke="#b0b4b8" stroke-width="0.6" fill="none"/>
<text x="101" y="161" font-size="4" fill="#c0c4c8" font-family="Liberation Sans">Y</text><text x="116" y="177" font-size="4" fill="#c0c4c8" font-family="Liberation Sans">X</text>
<path d="M96.2 166.6L102 178" stroke="#b0b840" stroke-width="1"/>
<path d="M341 41.4H343.5M345.5 40.4h2v2h-2zM350 40.4l2 2M352 40.4l-2 2" stroke="#c0c0c0" stroke-width="0.6" fill="none"/>
<circle cx="340.2" cy="61" r="10.8" fill="none" stroke="#4e5560" stroke-width="2.2"/>
<rect x="335.3" y="55.5" width="9.9" height="10" fill="#a8a8a8"/><text x="337.3" y="61.5" font-size="2.5" fill="#666" font-family="Liberation Sans">TOP</text>
<g font-size="4" fill="#c0c4c8" font-family="Liberation Sans" font-weight="bold"><text x="338.8" y="51.5">N</text><text x="338.8" y="74">S</text><text x="350" y="62.5">E</text><text x="327.5" y="62.5">W</text></g>
<rect x="333.6" y="78.3" width="13.3" height="4.1" rx="1.5" fill="#8d939c"/>
<rect x="346.9" y="89.7" width="9.1" height="60.3" fill="#5e6066"/>
<rect x="356.5" y="37" width="0.5" height="141" fill="#e0e0e0"/>
<rect x="139.8" y="172.6" width="173.4" height="5.4" fill="#a4a4a4"/>
<rect x="139.8" y="172.6" width="10" height="5.4" fill="#7a7a7a"/>
<rect x="0.5" y="36.3" width="95.4" height="141.7" fill="#5b5b5b"/>
<rect x="0.5" y="36.3" width="3.2" height="141.7" fill="#4a4a4a"/>
<text x="5" y="43.5" font-size="3.8" fill="#d8d8d8" font-family="Liberation Sans">PROPERTIES</text>
<rect x="4.5" y="48.7" width="67.2" height="5.8" fill="#484848" stroke="#6a6a6a" stroke-width="0.3"/>
<text x="6" y="52.8" font-size="2.9" fill="#ccc" font-family="Liberation Sans">No selection</text>
<circle cx="78" cy="53" r="1.8" fill="#3a9a9a"/><rect x="83" y="52" width="3" height="1" fill="#bbb"/><circle cx="90" cy="53" r="1.6" fill="#bbb"/>
<rect x="4.5" y="56" width="87.5" height="5.5" fill="#434343"/>
<text x="6" y="60" font-size="2.9" fill="#e0e0e0" font-weight="bold" font-family="Liberation Sans">General</text>
<text x="88" y="60" font-size="2.9" fill="#ccc" font-family="Liberation Sans">▾</text>
<rect x="4.5" y="100.3" width="87.5" height="5.5" fill="#434343"/>
<text x="6" y="104.3" font-size="2.9" fill="#e0e0e0" font-weight="bold" font-family="Liberation Sans">3D Visualization</text>
<text x="88" y="104.3" font-size="2.9" fill="#ccc" font-family="Liberation Sans">▾</text>
<rect x="4.5" y="117.5" width="87.5" height="5.5" fill="#434343"/>
<text x="6" y="121.5" font-size="2.9" fill="#e0e0e0" font-weight="bold" font-family="Liberation Sans">Plot style</text>
<text x="88" y="121.5" font-size="2.9" fill="#ccc" font-family="Liberation Sans">▾</text>
<rect x="4.5" y="145.3" width="87.5" height="5.5" fill="#434343"/>
<text x="6" y="149.3" font-size="2.9" fill="#e0e0e0" font-weight="bold" font-family="Liberation Sans">View</text>
<text x="88" y="149.3" font-size="2.9" fill="#ccc" font-family="Liberation Sans">▾</text>
<g font-size="2.8" font-family="Liberation Sans" fill="#b8b8b8">
<text x="9.5" y="65.3">Color</text><text x="49" y="65.3">■ ByLayer</text>
<text x="9.5" y="70.5">Layer</text><text x="49" y="70.5">Dimension</text>
<text x="9.5" y="76">Linetype</text><text x="49" y="76">——— ByLayer</text>
<text x="9.5" y="81.3">Linetype scale</text><text x="49" y="81.3">1.00000</text>
<text x="9.5" y="86.6">Lineweight</text><text x="49" y="86.6">——— ByLayer</text>
<text x="9.5" y="92.3">Transparency</text><text x="49" y="92.3">ByLayer</text>
<text x="9.5" y="97.5">Thickness</text><text x="49" y="97.5">0"</text>
<text x="9.5" y="109.5">Material</text><text x="49" y="109.5">ByLayer</text>
<text x="9.5" y="114.9">Shadow display</text><text x="49" y="114.9">Casts and Receives Shado...</text>
<text x="9.5" y="126.6">Plot style</text><text x="49" y="126.6">ByColor</text>
<text x="9.5" y="132.4">Plot style table</text><text x="49" y="132.4">None</text>
<text x="9.5" y="137.6">Plot table attached to</text><text x="49" y="137.6">Model</text>
<text x="9.5" y="143">Plot table type</text><text x="49" y="143">Not available</text>
<text x="9.5" y="155.3">Center X</text><text x="49" y="155.3">38'-1 11/16"</text>
<text x="9.5" y="160.5">Center Y</text><text x="49" y="160.5">14'-7 3/16"</text>
<text x="9.5" y="165.6">Center Z</text><text x="49" y="165.6">0"</text>
<text x="9.5" y="170.8">Height</text><text x="49" y="170.8">33'-6 5/16"</text>
<text x="9.5" y="175.7">Width</text><text x="49" y="175.7">91'-11 29/32"</text>
</g>
</svg></div>
<div class="im" id="i6" style="left:734px;top:368px;width:362px;height:178px;background:#8a8a8a"><svg width="362" height="178" viewBox="0 0 362 178" style="left:0;top:0">
<defs><linearGradient id="rg6" x1="0" x2="0" y1="0" y2="1"><stop offset="0" stop-color="#e8e8e8"/><stop offset="1" stop-color="#b8b8b8"/></linearGradient>
<pattern id="tg6" x="106" y="47.2" width="4.3" height="2.8" patternUnits="userSpaceOnUse"><rect width="4.3" height="2.8" fill="#fff"/><path d="M0 0.25H4.3M0.25 0V2.8" stroke="#9a9a9a" stroke-width="0.5"/></pattern>
<pattern id="hp6" width="2" height="2" patternUnits="userSpaceOnUse" patternTransform="rotate(45)"><rect width="2" height="2" fill="#e0e0e0"/><rect width="0.7" height="2" fill="#a8a8a8"/></pattern></defs>
<rect width="362" height="178" fill="#8c8c8c"/>
<rect x="0" y="0" width="352.6" height="13.7" fill="#f4f4f4"/>
<rect x="0" y="13.7" width="352.6" height="3.6" fill="#e9e9e9"/>
<rect x="352.6" y="0" width="9.4" height="17.5" fill="url(#rg6)"/>
<rect x="223" y="0.3" width="7.5" height="13.5" fill="#c8dcf0"/>
<rect x="0" y="17.3" width="362" height="5.5" fill="#a3a3a3"/>
<path d="M4 22.8L6 18.3H26L28 22.8Z" fill="#e4e4e4"/>
<text x="7" y="21.6" font-size="2.5" fill="#555" font-family="Liberation Sans">Разметка_А3 ×</text>
<rect x="30" y="18.8" width="4" height="3.5" fill="#c4c4c4"/>
<rect x="0" y="22.8" width="362" height="1.7" fill="#c4c4c4"/>
<g fill="#777" font-size="2.5" font-family="Liberation Sans"><text x="13" y="16.5">Модификация ▾</text><text x="50" y="16.5">Слои</text><text x="66" y="16.5">Редактирование ▾</text><text x="98" y="16.5">Колонки ▾</text><text x="118" y="16.5">Редактирование ▾</text><text x="143" y="16.5">Стили ▾</text><text x="162" y="16.5">Компоненты</text><text x="202" y="16.5">Вид ▾</text><text x="227" y="16.5">Выбор</text><text x="273" y="16.5">Слой ▾</text><text x="327" y="16.5">Группы ▾</text><text x="343" y="16.5">Вид ▾</text></g>
<g stroke="#dcdcdc" stroke-width="0.4"><path d="M45 1V17M55 1V17M96 1V17M113 1V17M141 1V17M160 1V17M185 1V17M257 1V17M325 1V17M340 1V17"/></g>
<g fill="#cdcdcd">
<rect x="3" y="3" width="6" height="6"/>
<rect x="14" y="3" width="6" height="6"/>
<rect x="47" y="3" width="6" height="6"/>
<rect x="58" y="2" width="3" height="1.5"/>
<rect x="58" y="6.5" width="8" height="1.5"/>
<rect x="58" y="11" width="3" height="1.5"/>
<rect x="64" y="2" width="4" height="1.5"/>
<rect x="64" y="6.5" width="2.5" height="1.5"/>
<rect x="64" y="11" width="8" height="1.5"/>
<rect x="71" y="6.5" width="3" height="1.5"/>
<rect x="71" y="11" width="2.5" height="1.5"/>
<rect x="78" y="2" width="3" height="1.5"/>
<rect x="78" y="11" width="8" height="1.5"/>
<rect x="85" y="2" width="3" height="1.5"/>
<rect x="85" y="6.5" width="4" height="1.5"/>
<rect x="85" y="11" width="2.5" height="1.5"/>
<rect x="100" y="2" width="4" height="1.5"/>
<rect x="100" y="6.5" width="2.5" height="1.5"/>
<rect x="100" y="11" width="4" height="1.5"/>
<rect x="107" y="6.5" width="2.5" height="1.5"/>
<rect x="107" y="11" width="2.5" height="1.5"/>
<rect x="114" y="2" width="4" height="1.5"/>
<rect x="114" y="6.5" width="2.5" height="1.5"/>
<rect x="121" y="2" width="3" height="1.5"/>
<rect x="121" y="11" width="8" height="1.5"/>
<rect x="128" y="6.5" width="2.5" height="1.5"/>
<rect x="128" y="11" width="3" height="1.5"/>
<rect x="146" y="6.5" width="2.5" height="1.5"/>
<rect x="146" y="11" width="2.5" height="1.5"/>
<rect x="152" y="11" width="3" height="1.5"/>
<rect x="158" y="2" width="2.5" height="1.5"/>
<rect x="158" y="6.5" width="8" height="1.5"/>
<rect x="158" y="11" width="3" height="1.5"/>
<rect x="165" y="2" width="3" height="1.5"/>
<rect x="172" y="2" width="8" height="1.5"/>
<rect x="172" y="6.5" width="8" height="1.5"/>
<rect x="188" y="2" width="4" height="1.5"/>
<rect x="188" y="11" width="3" height="1.5"/>
<rect x="194" y="2" width="2.5" height="1.5"/>
<rect x="194" y="6.5" width="3" height="1.5"/>
<rect x="194" y="11" width="4" height="1.5"/>
<rect x="200" y="2" width="4" height="1.5"/>
<rect x="200" y="11" width="2.5" height="1.5"/>
<rect x="206" y="2" width="3" height="1.5"/>
<rect x="206" y="6.5" width="4" height="1.5"/>
<rect x="206" y="11" width="8" height="1.5"/>
<rect x="212" y="2" width="8" height="1.5"/>
<rect x="212" y="11" width="8" height="1.5"/>
<rect x="238" y="2" width="3" height="1.5"/>
<rect x="238" y="6.5" width="3" height="1.5"/>
<rect x="246" y="2" width="3" height="1.5"/>
<rect x="246" y="6.5" width="3" height="1.5"/>
<rect x="246" y="11" width="8" height="1.5"/>
<rect x="262" y="6.5" width="8" height="1.5"/>
<rect x="262" y="11" width="2.5" height="1.5"/>
<rect x="268" y="2" width="4" height="1.5"/>
<rect x="268" y="6.5" width="8" height="1.5"/>
<rect x="268" y="11" width="8" height="1.5"/>
<rect x="275" y="2" width="3" height="1.5"/>
<rect x="282" y="2" width="8" height="1.5"/>
<rect x="282" y="6.5" width="2.5" height="1.5"/>
<rect x="282" y="11" width="3" height="1.5"/>
<rect x="289" y="2" width="2.5" height="1.5"/>
<rect x="289" y="6.5" width="8" height="1.5"/>
<rect x="289" y="11" width="2.5" height="1.5"/>
<rect x="296" y="2" width="4" height="1.5"/>
<rect x="296" y="6.5" width="3" height="1.5"/>
<rect x="296" y="11" width="3" height="1.5"/>
<rect x="303" y="11" width="3" height="1.5"/>
<rect x="310" y="2" width="2.5" height="1.5"/>
<rect x="310" y="6.5" width="4" height="1.5"/>
<rect x="310" y="11" width="2.5" height="1.5"/>
<rect x="330" y="2" width="2.5" height="1.5"/>
<rect x="330" y="6.5" width="4" height="1.5"/>
<rect x="330" y="11" width="2.5" height="1.5"/>
<rect x="337" y="2" width="4" height="1.5"/>
<rect x="337" y="6.5" width="3" height="1.5"/>
<rect x="345" y="6.5" width="8" height="1.5"/>
</g>
<rect x="3" y="2" width="6" height="7" fill="#d8d8d8" stroke="#aaa" stroke-width="0.4"/><rect x="14" y="2" width="7" height="7" fill="#d8d8d8" stroke="#aaa" stroke-width="0.4"/>
<circle cx="37" cy="5.5" r="3.5" fill="#e4e4e4" stroke="#aaa" stroke-width="0.4"/>
<rect x="277" y="1.5" width="3" height="3" fill="#e8a030"/>
<rect x="0" y="0" width="1.6" height="178" fill="#3a3a3a"/>
<rect x="1.6" y="24.5" width="4.2" height="146.3" fill="#d6d6d6"/>
<rect x="5.8" y="24.5" width="0.6" height="146.3" fill="#777"/>
<text transform="translate(4.8 72) rotate(-90)" font-size="2.4" fill="#555" font-family="Liberation Sans">Свойства листа</text>
<text transform="translate(4.8 150) rotate(-90)" font-size="2.4" fill="#555" font-family="Liberation Sans">Свойства чертежа   Диспетчер</text>
<rect x="76.2" y="27.8" width="196.9" height="139.3" fill="#ffffff"/>
<rect x="88.6" y="32.3" width="171.2" height="130.2" fill="none" stroke="#d8d8d8" stroke-width="0.5" stroke-dasharray="1 1"/>
<rect x="106" y="47.2" width="137" height="102.9" fill="url(#tg6)"/>
<rect x="111" y="38" width="144.5" height="105" fill="#000" opacity="0.25"/>
<rect x="110.1" y="36.9" width="143.8" height="104.9" fill="#f0f0f0" stroke="#2a2a2a" stroke-width="1.3"/>
<rect x="110.1" y="36.9" width="143.8" height="5" fill="#3e3e3e"/>
<rect x="111.6" y="38" width="2.3" height="2.3" fill="#c03030"/>
<rect x="247.8" y="37.3" width="5.3" height="3.8" fill="#d04040"/>
<text x="203" y="40.6" font-size="2.6" fill="#888" font-family="Liberation Sans">Параметры листа - Лист1</text>
<g font-size="2.4" font-family="Liberation Sans" fill="#555">
<text x="115" y="46.6">Набор параметров листа</text><text x="116" y="52">Имя:</text><text x="131" y="52">&lt;нет&gt;</text>
<text x="115" y="59.5">Принтер/плоттер</text><text x="116" y="64">Имя:</text><text x="116" y="69">Плоттер:</text><text x="116" y="73.5">Расположение:</text><text x="116" y="78">Описание:</text>
<text x="131" y="69">Нет</text><text x="131" y="73.5">Неприменимо</text><text x="131" y="78">Этот лист будет опубликован</text><text x="131" y="81">на плоттер по умолчанию</text>
<text x="115" y="90.5">Формат листа</text><text x="115" y="102">Область печати</text><text x="116" y="106.5">Что печатать:</text>
<text x="115" y="118">Смещение от начала (начало области печати)</text><text x="117" y="122">X:</text><text x="117" y="128">Y:</text><text x="132" y="122">мм</text><text x="132" y="128">мм</text><text x="149" y="122.5">Центрировать</text>
<text x="203.7" y="45.8">Таблица стилей печати (назначение перьев)</text><text x="208" y="57">Показать стили</text>
<text x="203.7" y="65">Параметры ВЭкрана</text><text x="203.7" y="70">Способ</text><text x="203.7" y="76">Качество</text><text x="203.7" y="82">Точек/дюйм</text>
<text x="203.7" y="91">Параметры печати</text><text x="208" y="94.5">Учитывать веса линий</text><text x="208" y="98.5">Прозрачность объектов</text><text x="208" y="102.5">Учитывать стили печати</text><text x="208" y="106.5">Объекты листа последними</text><text x="208" y="110.5">Скрывать объекты листа</text>
<text x="203.7" y="117.5">Ориентация чертежа</text><text x="208" y="121">Книжная</text><text x="208" y="125.5">Альбомная</text><text x="208" y="130">Перевернуть</text>
<text x="185" y="102">Масштаб печати</text><text x="185" y="106.5">Вписать</text><text x="185" y="111">Масштаб:</text><text x="184" y="128.5">Масштабировать веса линий</text>
</g>
<g fill="#fff" stroke="#adadad" stroke-width="0.35">
<rect x="130.8" y="61.2" width="47.2" height="3.3"/><rect x="115" y="93.8" width="61.3" height="2.5"/><rect x="115" y="108.7" width="16.6" height="3.3"/><rect x="120" y="119.5" width="11.6" height="3.2"/><rect x="120" y="125.5" width="11.6" height="3.2"/>
<rect x="203.7" y="51.5" width="29.3" height="3"/><rect x="217" y="68" width="20" height="3" fill="#eee"/><rect x="217" y="74" width="20" height="3"/><rect x="182" y="116.4" width="16.7" height="3.4"/><rect x="182" y="121.4" width="16.7" height="3.4"/>
<rect x="114" y="135.2" width="13.5" height="3.3" fill="#e6e6e6"/><rect x="200.4" y="135.7" width="14.2" height="3.3" fill="#dde8f4" stroke="#6a9ad0"/><rect x="218" y="135.7" width="15" height="3.3" fill="#e6e6e6"/><rect x="236.3" y="135.7" width="14.3" height="3.3" fill="#e6e6e6"/>
<rect x="205" y="54.8" width="2" height="2"/><rect x="205" y="92.6" width="2" height="2"/><rect x="205" y="96.6" width="2" height="2"/><rect x="205" y="100.6" width="2" height="2"/><rect x="205" y="104.6" width="2" height="2"/><rect x="205" y="108.6" width="2" height="2"/><rect x="205" y="119" width="2" height="2"/><rect x="205" y="123.5" width="2" height="2"/><rect x="205" y="128" width="2" height="2"/><rect x="146.5" y="120.5" width="2" height="2"/><rect x="182" y="126.5" width="2" height="2"/>
</g>
<g stroke="#dcdcdc" stroke-width="0.35" fill="none"><path d="M113 43.5H199M113 56H199M113 87H199M113 98.5H180M113 114.5H180M202 43H252M202 62H252M202 88H252M202 114H252M182 98.5H199"/></g>
<rect x="182" y="67.4" width="15" height="18.6" fill="#fff"/><rect x="184.5" y="71.5" width="10" height="12" fill="url(#hp6)" stroke="#888" stroke-width="0.3"/>
<path d="M187 48L191 48L191 54L187 54Z" fill="#3a6ab0"/><path d="M187 51L191 48L191 54L187 54Z" fill="#e8c030"/>
<rect x="229.7" y="121.4" width="4.1" height="5.1" fill="#c8d8e8" stroke="#6a8ab0" stroke-width="0.3"/>
<path d="M230.5 125L232 122.5L233 125" stroke="#333" stroke-width="0.4" fill="none"/>
<path d="M224 50L225.5 51.5" stroke="#555" stroke-width="0.5"/>
<path d="M8.5 151.5L18 168.5H10.5Z" fill="none" stroke="#6a78b8" stroke-width="0.6"/>
<path d="M351 26.5H353M355 25.5h2v2h-2zM358.5 25.5l2 2M360.5 25.5l-2 2" stroke="#b8b8b8" stroke-width="0.5" fill="none"/>
<rect x="356.8" y="73" width="5" height="14.5" fill="#9c9c9c"/>
<rect x="0" y="170.8" width="362" height="7.2" fill="#d4d4d4"/>
<rect x="1.6" y="171.6" width="4" height="5" fill="#666"/>
<text x="7" y="175.8" font-size="2.6" fill="#555" font-family="Liberation Sans">Команда: _Задайте противоположный угол или [Фигура/Рамка/Сечение]:</text>
</svg></div>

<div class="t" style="left:35px;top:223px">
<div style="letter-spacing:0.322px">Возможности программного</div>
<div style="letter-spacing:0.003px">пакета. Настройка интерфейса и</div>
<div style="letter-spacing:0.083px">рабочего пространства. Основные</div>
<div style="letter-spacing:0.136px">инструменты.</div>
</div>
<div class="t" style="left:398px;top:223px">
<div style="letter-spacing:-0.096px">Создание чертежа. Свойства</div>
<div style="letter-spacing:-0.05px">линии, настройка типа линии, веса</div>
<div style="letter-spacing:0.117px">и других параметров отображения</div>
<div style="letter-spacing:0.159px">объектов. Импорт изображения в</div>
<div style="letter-spacing:-0.7px">файл.</div>
</div>
<div class="t" style="left:760px;top:223px">
<div style="letter-spacing:0.032px">Работа со слоями. Штриховка и</div>
<div style="letter-spacing:0.036px">заливка. Оптимизация рабочего</div>
<div style="letter-spacing:0.04px">процесса, горячие клавиши.</div>
</div>
<div class="t" style="left:35px;top:571px">
<div style="letter-spacing:0.022px">Оформление чертежа.</div>
<div style="letter-spacing:0.117px">Автоматические размеры и</div>
<div style="letter-spacing:-0.007px">размерные стили, настройка и</div>
<div style="letter-spacing:0.13px">сохранение размерного стиля.</div>
<div style="letter-spacing:0.222px">Текст и текстовые стили.</div>
</div>
<div class="t" style="left:398px;top:571px">
<div style="letter-spacing:-0.257px">Размещение чертежа в масштабе</div>
<div style="letter-spacing:0.014px">на листе необходимого формата.</div>
<div style="letter-spacing:-0.15px">Работа с блоками.</div>
</div>
<div class="t" style="left:760px;top:571px">
<div style="letter-spacing:0.0px">Вывод листа в электронные</div>
<div style="letter-spacing:0.032px">форматы изображений,</div>
<div style="letter-spacing:0.004px">подготовка и вывод на печать.</div>
</div>
</body></html>
